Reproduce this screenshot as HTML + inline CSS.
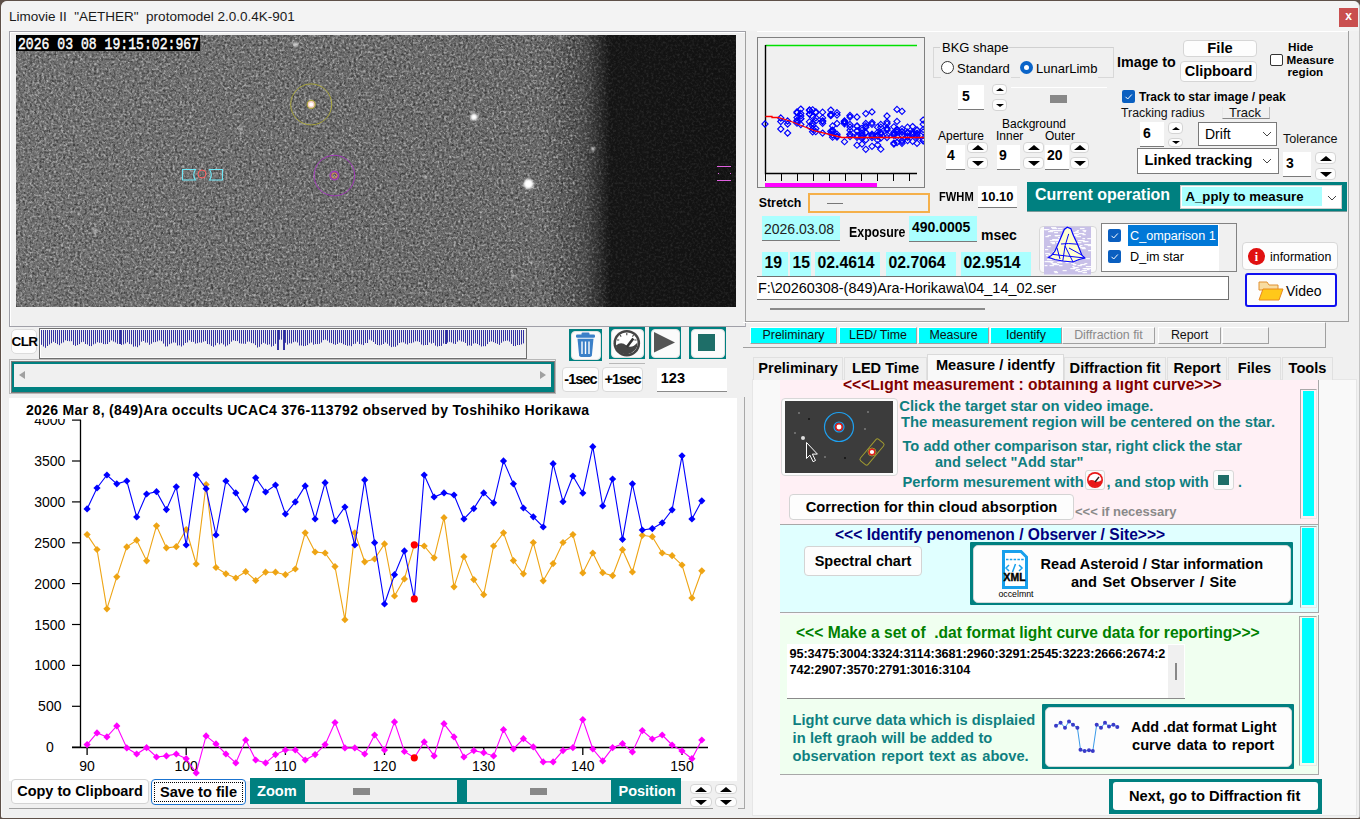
<!DOCTYPE html><html><head><meta charset="utf-8"><style>
*{box-sizing:border-box;margin:0;padding:0}
html,body{width:1360px;height:819px;overflow:hidden;background:#5e5048;font-family:"Liberation Sans",sans-serif;position:relative}
.a{position:absolute}
.t{position:absolute;white-space:nowrap;line-height:1}
.c{position:absolute;white-space:nowrap;display:flex;align-items:center;justify-content:center;line-height:1}
.btn{background:#fdfdfd;border:1px solid #d0d0d0;border-radius:4px;color:#000}
.spn{background:#fdfdfd;border:1px solid #d4d4d4;border-radius:4px;display:flex;align-items:center;justify-content:center}
.tu{width:0;height:0;border-style:solid;border-color:transparent transparent #000 transparent}
.td{width:0;height:0;border-style:solid;border-color:#000 transparent transparent transparent}
.edit{background:#fff;border-bottom:1px solid #7a7a7a}
</style></head><body><div class="a" style="left:1px;top:1px;width:1359px;height:817px;background:#f0f0f0;border-radius:6px 6px 2px 2px;border-left:1px solid #f8f8f8;border-right:1px solid #c4c4c4"></div>
<div class="a" style="left:2px;top:1px;width:1357px;height:30px;background:#f3f3f3;border-radius:6px 6px 0 0"></div>
<div class="t" style="left:9px;top:9.5px;font-size:13.5px;font-weight:normal;color:#1a1a1a;">Limovie II&nbsp;&nbsp;"AETHER"&nbsp;&nbsp;protomodel 2.0.0.4K-901</div>
<div class="a" style="left:1339px;top:8px;width:19px;height:19px;background:#c94f4f"></div>
<div class="c" style="left:1339px;top:6.5px;width:19px;height:19px;font-size:12px;font-weight:bold;color:#fff;">x</div>
<div class="a" style="left:9px;top:31px;width:737px;height:296px;border:1px solid #a0a0a8;border-right-color:#b0b0b8;background:#f0f0f0"></div>
<div class="a" style="left:10px;top:32px;width:735px;height:1px;background:#fff"></div>
<div class="a" style="left:10px;top:32px;width:1px;height:294px;background:#fff"></div>
<svg width="720" height="272" style="position:absolute;left:16px;top:35px">
<defs><linearGradient id="vg" x1="0" x2="1" y1="0" y2="0">
<stop offset="0" stop-color="#717171"/><stop offset="0.73" stop-color="#686868"/><stop offset="0.79" stop-color="#4a4a4a"/><stop offset="0.825" stop-color="#151515"/><stop offset="1" stop-color="#121212"/></linearGradient>
<filter id="bl" x="-1" y="-1" width="3" height="3"><feGaussianBlur stdDeviation="0.9"/></filter>
<filter id="nz" x="0" y="0" width="100%" height="100%"><feTurbulence type="fractalNoise" baseFrequency="0.42" numOctaves="2" seed="3"/><feColorMatrix values="0 0 0 0 1  0 0 0 0 1  0 0 0 0 1  0 0 0 2.4 -1.05"/><feGaussianBlur stdDeviation="0.45"/></filter>
<filter id="nz2" x="0" y="0" width="100%" height="100%"><feTurbulence type="fractalNoise" baseFrequency="0.42" numOctaves="2" seed="9"/><feColorMatrix values="0 0 0 0 0  0 0 0 0 0  0 0 0 0 0  0 0 0 2.4 -1.05"/><feGaussianBlur stdDeviation="0.45"/></filter>
<linearGradient id="mg" x1="0" x2="1"><stop offset="0" stop-color="#fff"/><stop offset="0.77" stop-color="#fff"/><stop offset="0.83" stop-color="#333"/><stop offset="1" stop-color="#333"/></linearGradient>
<mask id="mk"><rect width="720" height="272" fill="url(#mg)"/></mask></defs>
<rect width="720" height="272" fill="url(#vg)"/>
<g mask="url(#mk)"><rect width="720" height="272" filter="url(#nz)" opacity="0.5"/><rect width="720" height="272" filter="url(#nz2)" opacity="0.5"/></g>
<circle cx="512.5" cy="149" r="5" fill="#fff" opacity="1" filter="url(#bl)"/><circle cx="458" cy="82" r="3.5" fill="#fff" opacity="1" filter="url(#bl)"/><circle cx="577" cy="114" r="2" fill="#fff" opacity="0.75" filter="url(#bl)"/><circle cx="279.5" cy="9.5" r="2.2" fill="#fff" opacity="0.8" filter="url(#bl)"/><circle cx="225" cy="94" r="2" fill="#fff" opacity="0.55" filter="url(#bl)"/><circle cx="79.4" cy="196" r="2" fill="#fff" opacity="0.6" filter="url(#bl)"/><circle cx="409" cy="142" r="1.6" fill="#fff" opacity="0.5" filter="url(#bl)"/><circle cx="497.6" cy="241" r="1.8" fill="#fff" opacity="0.6" filter="url(#bl)"/><circle cx="516" cy="227.60000000000002" r="1.6" fill="#fff" opacity="0.5" filter="url(#bl)"/><circle cx="545" cy="2.6000000000000014" r="1.6" fill="#fff" opacity="0.6" filter="url(#bl)"/><circle cx="211.8" cy="164" r="1.5" fill="#fff" opacity="0.4" filter="url(#bl)"/>
<rect x="0" y="0" width="184" height="16" fill="#000"/>
<text x="2" y="14" font-family="Liberation Mono" font-size="16.5" fill="#fff" stroke="#fff" stroke-width="0.45" textLength="181" lengthAdjust="spacingAndGlyphs">2026 03 08 19:15:02:967</text>
<circle cx="295.2" cy="69.4" r="20.5" fill="none" stroke="#a8a43c" stroke-width="1"/>
<circle cx="295.2" cy="69.4" r="4" fill="#f8d0c8" stroke="#a8a43c" stroke-width="1.2"/>
<circle cx="295.2" cy="69.4" r="2" fill="#fff"/>
<circle cx="318.4" cy="140.6" r="20.3" fill="none" stroke="#a038b8" stroke-width="1"/>
<circle cx="318.4" cy="140.6" r="4.2" fill="none" stroke="#a038b8" stroke-width="1.5"/>
<circle cx="318.4" cy="140.6" r="2.6" fill="none" stroke="#e88858" stroke-width="1"/>
<circle cx="186" cy="139" r="4" fill="none" stroke="#ff6060" stroke-width="1"/>
<path d="M166.5 134.5 h13 q-3.5 5.25 0 10.5 h-13 z M206.5 134.5 h-13 q3.5 5.25 0 10.5 h13 z" fill="none" stroke="#70e8f8" stroke-width="1.1"/>
<path d="M701 131.5 h14 M701 145.5 h14" stroke="#e060e0" stroke-width="1"/>
<path d="M702 138.5 h1 M714 138.5 h1" stroke="#e060e0" stroke-width="1"/>
</svg>
<div class="c btn" style="left:11px;top:329px;width:26px;height:25px;font-size:13.5px;font-weight:bold;border-color:#dcdcdc;border-radius:5px;letter-spacing:-0.6px;padding-left:1px">CLR</div>
<div class="a" style="left:39px;top:328px;width:488px;height:31px;border:1px solid #6e6e6e;background:#f0f0f0"></div>
<div class="a" style="left:40px;top:329px;width:486px;height:1px;background:#fff"></div>
<div class="a" style="left:40px;top:329px;width:1px;height:29px;background:#fff"></div>
<div class="a" style="left:40px;top:357px;width:486px;height:1px;background:#fafafa"></div>
<svg class="a" style="left:39px;top:328px" width="487" height="30"><path d="M2.5 2 v14.8" stroke="#3434a4" stroke-width="1"/><path d="M4.5 2 v16.5" stroke="#3434a4" stroke-width="1"/><path d="M6.5 2 v17.8" stroke="#3434a4" stroke-width="1"/><path d="M8.5 2 v16.0" stroke="#3434a4" stroke-width="1"/><path d="M10.5 2 v14.5" stroke="#3434a4" stroke-width="1"/><path d="M12.5 2 v13.2" stroke="#3434a4" stroke-width="1"/><path d="M14.5 2 v11.8" stroke="#3434a4" stroke-width="1"/><path d="M16.5 2 v13.0" stroke="#3434a4" stroke-width="1"/><path d="M18.5 2 v14.2" stroke="#3434a4" stroke-width="1"/><path d="M20.5 2 v15.2" stroke="#3434a4" stroke-width="1"/><path d="M22.5 2 v13.3" stroke="#3434a4" stroke-width="1"/><path d="M24.5 2 v12.4" stroke="#3434a4" stroke-width="1"/><path d="M26.5 2 v10.3" stroke="#3434a4" stroke-width="1"/><path d="M28.5 2 v11.0" stroke="#3434a4" stroke-width="1"/><path d="M30.5 2 v11.2" stroke="#3434a4" stroke-width="1"/><path d="M32.5 2 v11.2" stroke="#3434a4" stroke-width="1"/><path d="M34.5 2 v14.9" stroke="#3434a4" stroke-width="1"/><path d="M36.5 2 v15.9" stroke="#3434a4" stroke-width="1"/><path d="M38.5 2 v15.1" stroke="#3434a4" stroke-width="1"/><path d="M40.5 2 v14.1" stroke="#3434a4" stroke-width="1"/><path d="M42.5 2 v12.2" stroke="#3434a4" stroke-width="1"/><path d="M44.5 2 v11.8" stroke="#3434a4" stroke-width="1"/><path d="M46.5 2 v14.0" stroke="#3434a4" stroke-width="1"/><path d="M48.5 2 v14.5" stroke="#3434a4" stroke-width="1"/><path d="M50.5 2 v16.0" stroke="#3434a4" stroke-width="1"/><path d="M52.5 2 v16.1" stroke="#3434a4" stroke-width="1"/><path d="M54.5 2 v14.4" stroke="#3434a4" stroke-width="1"/><path d="M56.5 2 v13.6" stroke="#3434a4" stroke-width="1"/><path d="M58.5 2 v12.2" stroke="#3434a4" stroke-width="1"/><path d="M60.5 2 v12.8" stroke="#3434a4" stroke-width="1"/><path d="M62.5 2 v12.8" stroke="#3434a4" stroke-width="1"/><path d="M64.5 2 v14.1" stroke="#3434a4" stroke-width="1"/><path d="M66.5 2 v14.2" stroke="#3434a4" stroke-width="1"/><path d="M68.5 2 v14.0" stroke="#3434a4" stroke-width="1"/><path d="M70.5 2 v12.1" stroke="#3434a4" stroke-width="1"/><path d="M72.5 2 v10.4" stroke="#3434a4" stroke-width="1"/><path d="M74.5 2 v11.5" stroke="#3434a4" stroke-width="1"/><path d="M76.5 2 v12.4" stroke="#3434a4" stroke-width="1"/><path d="M78.5 2 v13.8" stroke="#3434a4" stroke-width="1"/><path d="M81.5 2 v14.0" stroke="#3030a0" stroke-width="1"/><path d="M80.5 2 v14.0" stroke="#3434a4" stroke-width="1"/><path d="M82.5 2 v15.0" stroke="#3434a4" stroke-width="1"/><path d="M84.5 2 v14.4" stroke="#3434a4" stroke-width="1"/><path d="M86.5 2 v13.5" stroke="#3434a4" stroke-width="1"/><path d="M88.5 2 v12.2" stroke="#3434a4" stroke-width="1"/><path d="M90.5 2 v13.9" stroke="#3434a4" stroke-width="1"/><path d="M92.5 2 v14.3" stroke="#3434a4" stroke-width="1"/><path d="M94.5 2 v16.7" stroke="#3434a4" stroke-width="1"/><path d="M96.5 2 v16.4" stroke="#3434a4" stroke-width="1"/><path d="M98.5 2 v17.2" stroke="#3434a4" stroke-width="1"/><path d="M100.5 2 v15.4" stroke="#3434a4" stroke-width="1"/><path d="M102.5 2 v11.7" stroke="#3434a4" stroke-width="1"/><path d="M104.5 2 v11.0" stroke="#3434a4" stroke-width="1"/><path d="M106.5 2 v12.6" stroke="#3434a4" stroke-width="1"/><path d="M108.5 2 v12.6" stroke="#3434a4" stroke-width="1"/><path d="M110.5 2 v14.8" stroke="#3434a4" stroke-width="1"/><path d="M112.5 2 v13.7" stroke="#3434a4" stroke-width="1"/><path d="M114.5 2 v12.2" stroke="#3434a4" stroke-width="1"/><path d="M116.5 2 v12.1" stroke="#3434a4" stroke-width="1"/><path d="M118.5 2 v11.4" stroke="#3434a4" stroke-width="1"/><path d="M120.5 2 v10.4" stroke="#3434a4" stroke-width="1"/><path d="M122.5 2 v11.2" stroke="#3434a4" stroke-width="1"/><path d="M124.5 2 v13.6" stroke="#3434a4" stroke-width="1"/><path d="M126.5 2 v16.5" stroke="#3434a4" stroke-width="1"/><path d="M128.5 2 v16.4" stroke="#3434a4" stroke-width="1"/><path d="M130.5 2 v14.2" stroke="#3434a4" stroke-width="1"/><path d="M132.5 2 v13.4" stroke="#3434a4" stroke-width="1"/><path d="M134.5 2 v12.4" stroke="#3434a4" stroke-width="1"/><path d="M136.5 2 v12.7" stroke="#3434a4" stroke-width="1"/><path d="M138.5 2 v15.5" stroke="#3434a4" stroke-width="1"/><path d="M140.5 2 v15.3" stroke="#3434a4" stroke-width="1"/><path d="M142.5 2 v16.5" stroke="#3434a4" stroke-width="1"/><path d="M144.5 2 v15.3" stroke="#3434a4" stroke-width="1"/><path d="M146.5 2 v13.0" stroke="#3434a4" stroke-width="1"/><path d="M148.5 2 v12.4" stroke="#3434a4" stroke-width="1"/><path d="M150.5 2 v10.3" stroke="#3434a4" stroke-width="1"/><path d="M152.5 2 v11.9" stroke="#3434a4" stroke-width="1"/><path d="M154.5 2 v11.9" stroke="#3434a4" stroke-width="1"/><path d="M156.5 2 v13.6" stroke="#3434a4" stroke-width="1"/><path d="M158.5 2 v13.2" stroke="#3434a4" stroke-width="1"/><path d="M160.5 2 v12.4" stroke="#3434a4" stroke-width="1"/><path d="M162.5 2 v12.7" stroke="#3434a4" stroke-width="1"/><path d="M164.5 2 v11.7" stroke="#3434a4" stroke-width="1"/><path d="M166.5 2 v11.1" stroke="#3434a4" stroke-width="1"/><path d="M168.5 2 v14.0" stroke="#3434a4" stroke-width="1"/><path d="M170.5 2 v14.3" stroke="#3434a4" stroke-width="1"/><path d="M172.5 2 v15.9" stroke="#3434a4" stroke-width="1"/><path d="M174.5 2 v16.8" stroke="#3434a4" stroke-width="1"/><path d="M176.5 2 v15.3" stroke="#3434a4" stroke-width="1"/><path d="M178.5 2 v12.9" stroke="#3434a4" stroke-width="1"/><path d="M180.5 2 v14.4" stroke="#3434a4" stroke-width="1"/><path d="M182.5 2 v13.2" stroke="#3434a4" stroke-width="1"/><path d="M184.5 2 v14.5" stroke="#3434a4" stroke-width="1"/><path d="M186.5 2 v16.5" stroke="#3434a4" stroke-width="1"/><path d="M188.5 2 v15.4" stroke="#3434a4" stroke-width="1"/><path d="M190.5 2 v14.1" stroke="#3434a4" stroke-width="1"/><path d="M192.5 2 v11.7" stroke="#3434a4" stroke-width="1"/><path d="M194.5 2 v10.3" stroke="#3434a4" stroke-width="1"/><path d="M196.5 2 v11.0" stroke="#3434a4" stroke-width="1"/><path d="M198.5 2 v11.1" stroke="#3434a4" stroke-width="1"/><path d="M200.5 2 v13.2" stroke="#3434a4" stroke-width="1"/><path d="M202.5 2 v13.6" stroke="#3434a4" stroke-width="1"/><path d="M204.5 2 v13.7" stroke="#3434a4" stroke-width="1"/><path d="M206.5 2 v13.8" stroke="#3434a4" stroke-width="1"/><path d="M208.5 2 v11.7" stroke="#3434a4" stroke-width="1"/><path d="M210.5 2 v11.6" stroke="#3434a4" stroke-width="1"/><path d="M212.5 2 v13.1" stroke="#3434a4" stroke-width="1"/><path d="M214.5 2 v13.4" stroke="#3434a4" stroke-width="1"/><path d="M216.5 2 v15.1" stroke="#3434a4" stroke-width="1"/><path d="M218.5 2 v17.5" stroke="#3434a4" stroke-width="1"/><path d="M220.5 2 v16.8" stroke="#3434a4" stroke-width="1"/><path d="M222.5 2 v14.2" stroke="#3434a4" stroke-width="1"/><path d="M224.5 2 v12.8" stroke="#3434a4" stroke-width="1"/><path d="M226.5 2 v13.7" stroke="#3434a4" stroke-width="1"/><path d="M228.5 2 v14.8" stroke="#3434a4" stroke-width="1"/><path d="M230.5 2 v14.3" stroke="#3434a4" stroke-width="1"/><path d="M232.5 2 v16.6" stroke="#3434a4" stroke-width="1"/><path d="M234.5 2 v15.9" stroke="#3434a4" stroke-width="1"/><path d="M236.5 2 v13.8" stroke="#3434a4" stroke-width="1"/><path d="M239.5 2 v20.0" stroke="#3030a0" stroke-width="1"/><path d="M238.5 2 v20.0" stroke="#3434a4" stroke-width="1"/><path d="M240.5 2 v9.7" stroke="#3434a4" stroke-width="1"/><path d="M242.5 2 v9.7" stroke="#3434a4" stroke-width="1"/><path d="M245.5 2 v20.0" stroke="#3030a0" stroke-width="1"/><path d="M244.5 2 v20.0" stroke="#3434a4" stroke-width="1"/><path d="M246.5 2 v12.8" stroke="#3434a4" stroke-width="1"/><path d="M248.5 2 v14.6" stroke="#3434a4" stroke-width="1"/><path d="M250.5 2 v13.3" stroke="#3434a4" stroke-width="1"/><path d="M252.5 2 v13.5" stroke="#3434a4" stroke-width="1"/><path d="M254.5 2 v12.2" stroke="#3434a4" stroke-width="1"/><path d="M256.5 2 v11.6" stroke="#3434a4" stroke-width="1"/><path d="M258.5 2 v12.5" stroke="#3434a4" stroke-width="1"/><path d="M260.5 2 v15.5" stroke="#3434a4" stroke-width="1"/><path d="M262.5 2 v15.5" stroke="#3434a4" stroke-width="1"/><path d="M264.5 2 v16.1" stroke="#3434a4" stroke-width="1"/><path d="M266.5 2 v15.9" stroke="#3434a4" stroke-width="1"/><path d="M268.5 2 v15.1" stroke="#3434a4" stroke-width="1"/><path d="M270.5 2 v13.4" stroke="#3434a4" stroke-width="1"/><path d="M272.5 2 v12.5" stroke="#3434a4" stroke-width="1"/><path d="M274.5 2 v14.7" stroke="#3434a4" stroke-width="1"/><path d="M276.5 2 v14.1" stroke="#3434a4" stroke-width="1"/><path d="M278.5 2 v14.1" stroke="#3434a4" stroke-width="1"/><path d="M280.5 2 v13.8" stroke="#3434a4" stroke-width="1"/><path d="M282.5 2 v12.5" stroke="#3434a4" stroke-width="1"/><path d="M284.5 2 v10.1" stroke="#3434a4" stroke-width="1"/><path d="M286.5 2 v9.6" stroke="#3434a4" stroke-width="1"/><path d="M288.5 2 v10.7" stroke="#3434a4" stroke-width="1"/><path d="M290.5 2 v12.6" stroke="#3434a4" stroke-width="1"/><path d="M292.5 2 v13.1" stroke="#3434a4" stroke-width="1"/><path d="M294.5 2 v14.2" stroke="#3434a4" stroke-width="1"/><path d="M296.5 2 v14.8" stroke="#3434a4" stroke-width="1"/><path d="M298.5 2 v14.0" stroke="#3434a4" stroke-width="1"/><path d="M300.5 2 v12.6" stroke="#3434a4" stroke-width="1"/><path d="M302.5 2 v13.1" stroke="#3434a4" stroke-width="1"/><path d="M304.5 2 v14.3" stroke="#3434a4" stroke-width="1"/><path d="M306.5 2 v15.0" stroke="#3434a4" stroke-width="1"/><path d="M308.5 2 v15.8" stroke="#3434a4" stroke-width="1"/><path d="M310.5 2 v15.5" stroke="#3434a4" stroke-width="1"/><path d="M312.5 2 v16.2" stroke="#3434a4" stroke-width="1"/><path d="M314.5 2 v14.1" stroke="#3434a4" stroke-width="1"/><path d="M316.5 2 v13.7" stroke="#3434a4" stroke-width="1"/><path d="M318.5 2 v11.7" stroke="#3434a4" stroke-width="1"/><path d="M320.5 2 v14.0" stroke="#3434a4" stroke-width="1"/><path d="M322.5 2 v14.5" stroke="#3434a4" stroke-width="1"/><path d="M324.5 2 v15.1" stroke="#3434a4" stroke-width="1"/><path d="M326.5 2 v13.1" stroke="#3434a4" stroke-width="1"/><path d="M328.5 2 v13.0" stroke="#3434a4" stroke-width="1"/><path d="M330.5 2 v9.6" stroke="#3434a4" stroke-width="1"/><path d="M332.5 2 v10.5" stroke="#3434a4" stroke-width="1"/><path d="M334.5 2 v12.0" stroke="#3434a4" stroke-width="1"/><path d="M336.5 2 v14.0" stroke="#3434a4" stroke-width="1"/><path d="M338.5 2 v15.0" stroke="#3434a4" stroke-width="1"/><path d="M340.5 2 v15.3" stroke="#3434a4" stroke-width="1"/><path d="M342.5 2 v14.8" stroke="#3434a4" stroke-width="1"/><path d="M344.5 2 v14.0" stroke="#3434a4" stroke-width="1"/><path d="M346.5 2 v12.4" stroke="#3434a4" stroke-width="1"/><path d="M348.5 2 v13.8" stroke="#3434a4" stroke-width="1"/><path d="M350.5 2 v15.7" stroke="#3434a4" stroke-width="1"/><path d="M352.5 2 v17.1" stroke="#3434a4" stroke-width="1"/><path d="M354.5 2 v16.7" stroke="#3434a4" stroke-width="1"/><path d="M356.5 2 v16.8" stroke="#3434a4" stroke-width="1"/><path d="M358.5 2 v15.3" stroke="#3434a4" stroke-width="1"/><path d="M360.5 2 v13.0" stroke="#3434a4" stroke-width="1"/><path d="M362.5 2 v12.4" stroke="#3434a4" stroke-width="1"/><path d="M364.5 2 v12.3" stroke="#3434a4" stroke-width="1"/><path d="M366.5 2 v13.7" stroke="#3434a4" stroke-width="1"/><path d="M368.5 2 v14.5" stroke="#3434a4" stroke-width="1"/><path d="M370.5 2 v13.1" stroke="#3434a4" stroke-width="1"/><path d="M372.5 2 v13.2" stroke="#3434a4" stroke-width="1"/><path d="M374.5 2 v12.4" stroke="#3434a4" stroke-width="1"/><path d="M376.5 2 v11.3" stroke="#3434a4" stroke-width="1"/><path d="M378.5 2 v11.3" stroke="#3434a4" stroke-width="1"/><path d="M380.5 2 v12.0" stroke="#3434a4" stroke-width="1"/><path d="M382.5 2 v14.5" stroke="#3434a4" stroke-width="1"/><path d="M384.5 2 v15.3" stroke="#3434a4" stroke-width="1"/><path d="M386.5 2 v15.0" stroke="#3434a4" stroke-width="1"/><path d="M388.5 2 v15.0" stroke="#3434a4" stroke-width="1"/><path d="M390.5 2 v12.4" stroke="#3434a4" stroke-width="1"/><path d="M392.5 2 v13.6" stroke="#3434a4" stroke-width="1"/><path d="M394.5 2 v12.9" stroke="#3434a4" stroke-width="1"/><path d="M396.5 2 v15.6" stroke="#3434a4" stroke-width="1"/><path d="M398.5 2 v16.5" stroke="#3434a4" stroke-width="1"/><path d="M400.5 2 v16.0" stroke="#3434a4" stroke-width="1"/><path d="M402.5 2 v15.9" stroke="#3434a4" stroke-width="1"/><path d="M404.5 2 v13.6" stroke="#3434a4" stroke-width="1"/><path d="M407.5 2 v14.0" stroke="#3030a0" stroke-width="1"/><path d="M406.5 2 v14.0" stroke="#3434a4" stroke-width="1"/><path d="M408.5 2 v12.6" stroke="#3434a4" stroke-width="1"/><path d="M410.5 2 v11.8" stroke="#3434a4" stroke-width="1"/><path d="M412.5 2 v12.4" stroke="#3434a4" stroke-width="1"/><path d="M414.5 2 v13.6" stroke="#3434a4" stroke-width="1"/><path d="M416.5 2 v14.0" stroke="#3434a4" stroke-width="1"/><path d="M418.5 2 v11.7" stroke="#3434a4" stroke-width="1"/><path d="M420.5 2 v10.3" stroke="#3434a4" stroke-width="1"/><path d="M422.5 2 v11.5" stroke="#3434a4" stroke-width="1"/><path d="M424.5 2 v11.8" stroke="#3434a4" stroke-width="1"/><path d="M426.5 2 v13.0" stroke="#3434a4" stroke-width="1"/><path d="M428.5 2 v15.7" stroke="#3434a4" stroke-width="1"/><path d="M430.5 2 v15.3" stroke="#3434a4" stroke-width="1"/><path d="M432.5 2 v15.8" stroke="#3434a4" stroke-width="1"/><path d="M434.5 2 v13.6" stroke="#3434a4" stroke-width="1"/><path d="M436.5 2 v13.2" stroke="#3434a4" stroke-width="1"/><path d="M438.5 2 v14.0" stroke="#3434a4" stroke-width="1"/><path d="M440.5 2 v15.2" stroke="#3434a4" stroke-width="1"/><path d="M442.5 2 v16.5" stroke="#3434a4" stroke-width="1"/><path d="M444.5 2 v16.2" stroke="#3434a4" stroke-width="1"/><path d="M446.5 2 v16.2" stroke="#3434a4" stroke-width="1"/><path d="M448.5 2 v14.1" stroke="#3434a4" stroke-width="1"/><path d="M450.5 2 v11.9" stroke="#3434a4" stroke-width="1"/><path d="M452.5 2 v11.4" stroke="#3434a4" stroke-width="1"/><path d="M454.5 2 v12.1" stroke="#3434a4" stroke-width="1"/><path d="M456.5 2 v13.1" stroke="#3434a4" stroke-width="1"/><path d="M458.5 2 v13.9" stroke="#3434a4" stroke-width="1"/><path d="M460.5 2 v14.9" stroke="#3434a4" stroke-width="1"/><path d="M462.5 2 v12.8" stroke="#3434a4" stroke-width="1"/><path d="M464.5 2 v11.4" stroke="#3434a4" stroke-width="1"/><path d="M466.5 2 v10.9" stroke="#3434a4" stroke-width="1"/><path d="M468.5 2 v10.6" stroke="#3434a4" stroke-width="1"/><path d="M470.5 2 v11.6" stroke="#3434a4" stroke-width="1"/><path d="M472.5 2 v13.9" stroke="#3434a4" stroke-width="1"/><path d="M474.5 2 v16.0" stroke="#3434a4" stroke-width="1"/><path d="M476.5 2 v16.1" stroke="#3434a4" stroke-width="1"/><path d="M478.5 2 v15.0" stroke="#3434a4" stroke-width="1"/><path d="M480.5 2 v15.0" stroke="#3434a4" stroke-width="1"/><path d="M482.5 2 v14.4" stroke="#3434a4" stroke-width="1"/><path d="M484.5 2 v13.4" stroke="#3434a4" stroke-width="1"/></svg>
<div class="a" style="left:9px;top:359px;width:547px;height:35px;border:1px solid #b8b8b8;background:#f0f0f0"></div>
<div class="a" style="left:11px;top:361px;width:544px;height:32px;background:#008080;border:1px solid #7a7a7a"></div>
<div class="a" style="left:14px;top:364px;width:537px;height:23px;background:#f0f0f0"></div>
<div class="a" style="left:19px;top:371px;width:0;height:0;border-style:solid;border-width:4px 6px 4px 0;border-color:transparent #a0a0a0 transparent transparent"></div>
<div class="a" style="left:540px;top:371px;width:0;height:0;border-style:solid;border-width:4px 0 4px 6px;border-color:transparent transparent transparent #a0a0a0"></div>
<div class="a" style="left:569px;top:329px;width:33px;height:32px;background:#008080"></div>
<div class="a" style="left:570.5px;top:330.5px;width:30px;height:29px;background:#fbfbfb;border:1px solid #e2e2e2;border-radius:4px"></div>
<div class="a" style="left:609px;top:327px;width:36px;height:32px;background:#008080"></div>
<div class="a" style="left:610.5px;top:328.5px;width:33px;height:29px;background:#fbfbfb;border:1px solid #e2e2e2;border-radius:4px"></div>
<div class="a" style="left:649px;top:327px;width:32px;height:32px;background:#008080"></div>
<div class="a" style="left:650.5px;top:328.5px;width:29px;height:29px;background:#fbfbfb;border:1px solid #e2e2e2;border-radius:4px"></div>
<div class="a" style="left:689px;top:327px;width:37px;height:32px;background:#008080"></div>
<div class="a" style="left:690.5px;top:328.5px;width:34px;height:29px;background:#fbfbfb;border:1px solid #e2e2e2;border-radius:4px"></div>
<svg class="a" style="left:569px;top:329px" width="33" height="32"><g fill="#3b80c8"><rect x="7" y="5.5" width="19" height="3.2" rx="1.3"/><rect x="12.5" y="3.5" width="8" height="3" rx="1.2"/><path d="M8.5 9.8 h16 l-1.6 16.5 q-0.3 1.6 -2 1.6 h-8.8 q-1.7 0 -2 -1.6 z"/></g><g stroke="#fff" stroke-width="1.4"><path d="M13 12.5 v12.5 M16.5 12.5 v12.5 M20 12.5 v12.5"/></g></svg>
<div class="a" style="left:609px;top:363px;width:36px;height:1px;background:#b8b8b8"></div>
<svg class="a" style="left:609px;top:327px" width="36" height="32"><circle cx="17.8" cy="16.2" r="13.3" fill="#444"/><circle cx="17.8" cy="16.2" r="10.8" fill="#fff"/><path d="M7 18.5 q5 -4.5 10.5 0 q5.5 3.5 11 -3 q0.5 9 -10.7 12 q-10.5 -1 -10.8 -9z" fill="#444"/><path d="M17.8 20 l6.5 -8.5" stroke="#333" stroke-width="2.6"/><g stroke="#444" stroke-width="1.1"><path d="M17.8 6 v2.2 M11 8 l1.2 1.6 M24.6 8 l-1.2 1.6 M8 13 h2.2 M27.6 13 h-2.2 M7.5 19 h2 M28 19 h-2"/></g></svg>
<svg class="a" style="left:649px;top:327px" width="32" height="32"><path d="M5 5 L26 15.5 L5 25.4 Z" fill="#555"/></svg>
<div class="a" style="left:698px;top:334px;width:17px;height:17px;background:#1e6e68"></div>
<div class="c btn" style="left:562px;top:367px;width:37px;height:25px;font-size:14.5px;font-weight:bold;border-color:#dadada;letter-spacing:-0.9px;padding-bottom:0px">-1sec</div>
<div class="c btn" style="left:602px;top:367px;width:41px;height:25px;font-size:14.5px;font-weight:bold;border-color:#dadada;letter-spacing:-0.9px;padding-bottom:0px">+1sec</div>
<div class="a" style="left:657px;top:368px;width:70px;height:24px;background:#fff;border-bottom:1px solid #8a8a8a"></div>
<div class="t" style="left:660.8px;top:370.5px;font-size:14.5px;font-weight:bold;color:#000;">123</div>
<div class="a" style="left:9px;top:397px;width:736px;height:412px;border-right:1px solid #a8a8a8;border-bottom:1px solid #a8a8a8;background:#f0f0f0"></div>
<div class="a" style="left:9px;top:398px;width:728px;height:383px;background:#fff"></div>
<div class="a" style="left:10px;top:398px;width:727px;height:383px;background:#fff"></div>
<svg class="a" style="left:0;top:0" width="1360" height="819"><path d="M80.5 420 V747.5 M72 747.5 H708" stroke="#000" stroke-width="1.3" fill="none"/><path d="M72 747.2 H81" stroke="#000" stroke-width="1.2"/><text x="49.8" y="752.2" text-anchor="middle" font-size="14" fill="#000">0</text><path d="M72 706.3 H81" stroke="#000" stroke-width="1.2"/><text x="49.8" y="711.3" text-anchor="middle" font-size="14" fill="#000">500</text><path d="M72 665.4 H81" stroke="#000" stroke-width="1.2"/><text x="49.8" y="670.4" text-anchor="middle" font-size="14" fill="#000">1000</text><path d="M72 624.5 H81" stroke="#000" stroke-width="1.2"/><text x="49.8" y="629.5" text-anchor="middle" font-size="14" fill="#000">1500</text><path d="M72 583.6 H81" stroke="#000" stroke-width="1.2"/><text x="49.8" y="588.6" text-anchor="middle" font-size="14" fill="#000">2000</text><path d="M72 542.8 H81" stroke="#000" stroke-width="1.2"/><text x="49.8" y="547.8" text-anchor="middle" font-size="14" fill="#000">2500</text><path d="M72 501.9 H81" stroke="#000" stroke-width="1.2"/><text x="49.8" y="506.9" text-anchor="middle" font-size="14" fill="#000">3000</text><path d="M72 461.0 H81" stroke="#000" stroke-width="1.2"/><text x="49.8" y="466.0" text-anchor="middle" font-size="14" fill="#000">3500</text><path d="M72 420.1 H81" stroke="#000" stroke-width="1.2"/><text x="49.8" y="425.1" text-anchor="middle" font-size="14" fill="#000">4000</text><path d="M87.1 747.5 V755" stroke="#000" stroke-width="1.3"/><text x="87.1" y="771" text-anchor="middle" font-size="14" fill="#000">90</text><path d="M186.2 747.5 V755" stroke="#000" stroke-width="1.3"/><text x="186.2" y="771" text-anchor="middle" font-size="14" fill="#000">100</text><path d="M285.4 747.5 V755" stroke="#000" stroke-width="1.3"/><text x="285.4" y="771" text-anchor="middle" font-size="14" fill="#000">110</text><path d="M384.5 747.5 V755" stroke="#000" stroke-width="1.3"/><text x="384.5" y="771" text-anchor="middle" font-size="14" fill="#000">120</text><path d="M483.7 747.5 V755" stroke="#000" stroke-width="1.3"/><text x="483.7" y="771" text-anchor="middle" font-size="14" fill="#000">130</text><path d="M582.8 747.5 V755" stroke="#000" stroke-width="1.3"/><text x="582.8" y="771" text-anchor="middle" font-size="14" fill="#000">140</text><path d="M682.0 747.5 V755" stroke="#000" stroke-width="1.3"/><text x="682.0" y="771" text-anchor="middle" font-size="14" fill="#000">150</text><polyline points="87.1,534.6 97.0,549.5 106.9,608.8 116.8,576.8 126.8,546.9 136.7,540.2 146.6,560.8 156.5,525.8 166.4,547.8 176.3,546.7 186.2,529.5 196.2,564.0 206.1,484.5 216.0,567.5 225.9,573.8 235.8,578.0 245.7,571.7 255.7,580.5 265.6,572.2 275.5,572.2 285.4,574.7 295.3,569.0 305.2,532.8 315.1,552.0 325.1,553.0 335.0,566.6 344.9,619.7 354.8,532.8 364.7,561.8 374.6,559.0 384.5,543.9 394.5,596.0 404.4,578.9 414.3,544.8 424.2,546.0 434.1,557.8 444.0,517.7 454.0,586.8 463.9,556.7 473.8,579.6 483.7,594.7 493.6,546.0 503.5,532.8 513.4,560.6 523.4,573.8 533.3,542.5 543.2,580.8 553.1,563.6 563.0,542.5 572.9,534.6 582.8,572.9 592.8,553.0 602.7,572.7 612.6,575.7 622.5,549.7 632.4,572.0 642.3,535.3 652.3,536.7 662.2,553.0 672.1,555.7 682.0,565.0 691.9,598.0 701.8,570.8" fill="none" stroke="#eea414" stroke-width="1.1"/><path d="M87.1 531.0 l3.6 3.6 l-3.6 3.6 l-3.6 -3.6z" fill="#eea414"/><path d="M97.0 545.9 l3.6 3.6 l-3.6 3.6 l-3.6 -3.6z" fill="#eea414"/><path d="M106.9 605.2 l3.6 3.6 l-3.6 3.6 l-3.6 -3.6z" fill="#eea414"/><path d="M116.8 573.2 l3.6 3.6 l-3.6 3.6 l-3.6 -3.6z" fill="#eea414"/><path d="M126.8 543.3 l3.6 3.6 l-3.6 3.6 l-3.6 -3.6z" fill="#eea414"/><path d="M136.7 536.6 l3.6 3.6 l-3.6 3.6 l-3.6 -3.6z" fill="#eea414"/><path d="M146.6 557.2 l3.6 3.6 l-3.6 3.6 l-3.6 -3.6z" fill="#eea414"/><path d="M156.5 522.2 l3.6 3.6 l-3.6 3.6 l-3.6 -3.6z" fill="#eea414"/><path d="M166.4 544.2 l3.6 3.6 l-3.6 3.6 l-3.6 -3.6z" fill="#eea414"/><path d="M176.3 543.1 l3.6 3.6 l-3.6 3.6 l-3.6 -3.6z" fill="#eea414"/><path d="M186.2 525.9 l3.6 3.6 l-3.6 3.6 l-3.6 -3.6z" fill="#eea414"/><path d="M196.2 560.4 l3.6 3.6 l-3.6 3.6 l-3.6 -3.6z" fill="#eea414"/><path d="M206.1 480.9 l3.6 3.6 l-3.6 3.6 l-3.6 -3.6z" fill="#eea414"/><path d="M216.0 563.9 l3.6 3.6 l-3.6 3.6 l-3.6 -3.6z" fill="#eea414"/><path d="M225.9 570.2 l3.6 3.6 l-3.6 3.6 l-3.6 -3.6z" fill="#eea414"/><path d="M235.8 574.4 l3.6 3.6 l-3.6 3.6 l-3.6 -3.6z" fill="#eea414"/><path d="M245.7 568.1 l3.6 3.6 l-3.6 3.6 l-3.6 -3.6z" fill="#eea414"/><path d="M255.7 576.9 l3.6 3.6 l-3.6 3.6 l-3.6 -3.6z" fill="#eea414"/><path d="M265.6 568.6 l3.6 3.6 l-3.6 3.6 l-3.6 -3.6z" fill="#eea414"/><path d="M275.5 568.6 l3.6 3.6 l-3.6 3.6 l-3.6 -3.6z" fill="#eea414"/><path d="M285.4 571.1 l3.6 3.6 l-3.6 3.6 l-3.6 -3.6z" fill="#eea414"/><path d="M295.3 565.4 l3.6 3.6 l-3.6 3.6 l-3.6 -3.6z" fill="#eea414"/><path d="M305.2 529.2 l3.6 3.6 l-3.6 3.6 l-3.6 -3.6z" fill="#eea414"/><path d="M315.1 548.4 l3.6 3.6 l-3.6 3.6 l-3.6 -3.6z" fill="#eea414"/><path d="M325.1 549.4 l3.6 3.6 l-3.6 3.6 l-3.6 -3.6z" fill="#eea414"/><path d="M335.0 563.0 l3.6 3.6 l-3.6 3.6 l-3.6 -3.6z" fill="#eea414"/><path d="M344.9 616.1 l3.6 3.6 l-3.6 3.6 l-3.6 -3.6z" fill="#eea414"/><path d="M354.8 529.2 l3.6 3.6 l-3.6 3.6 l-3.6 -3.6z" fill="#eea414"/><path d="M364.7 558.2 l3.6 3.6 l-3.6 3.6 l-3.6 -3.6z" fill="#eea414"/><path d="M374.6 555.4 l3.6 3.6 l-3.6 3.6 l-3.6 -3.6z" fill="#eea414"/><path d="M384.5 540.3 l3.6 3.6 l-3.6 3.6 l-3.6 -3.6z" fill="#eea414"/><path d="M394.5 592.4 l3.6 3.6 l-3.6 3.6 l-3.6 -3.6z" fill="#eea414"/><path d="M404.4 575.3 l3.6 3.6 l-3.6 3.6 l-3.6 -3.6z" fill="#eea414"/><circle cx="414.3" cy="544.8" r="3.6" fill="#ff0000"/><path d="M424.2 542.4 l3.6 3.6 l-3.6 3.6 l-3.6 -3.6z" fill="#eea414"/><path d="M434.1 554.2 l3.6 3.6 l-3.6 3.6 l-3.6 -3.6z" fill="#eea414"/><path d="M444.0 514.1 l3.6 3.6 l-3.6 3.6 l-3.6 -3.6z" fill="#eea414"/><path d="M454.0 583.2 l3.6 3.6 l-3.6 3.6 l-3.6 -3.6z" fill="#eea414"/><path d="M463.9 553.1 l3.6 3.6 l-3.6 3.6 l-3.6 -3.6z" fill="#eea414"/><path d="M473.8 576.0 l3.6 3.6 l-3.6 3.6 l-3.6 -3.6z" fill="#eea414"/><path d="M483.7 591.1 l3.6 3.6 l-3.6 3.6 l-3.6 -3.6z" fill="#eea414"/><path d="M493.6 542.4 l3.6 3.6 l-3.6 3.6 l-3.6 -3.6z" fill="#eea414"/><path d="M503.5 529.2 l3.6 3.6 l-3.6 3.6 l-3.6 -3.6z" fill="#eea414"/><path d="M513.4 557.0 l3.6 3.6 l-3.6 3.6 l-3.6 -3.6z" fill="#eea414"/><path d="M523.4 570.2 l3.6 3.6 l-3.6 3.6 l-3.6 -3.6z" fill="#eea414"/><path d="M533.3 538.9 l3.6 3.6 l-3.6 3.6 l-3.6 -3.6z" fill="#eea414"/><path d="M543.2 577.2 l3.6 3.6 l-3.6 3.6 l-3.6 -3.6z" fill="#eea414"/><path d="M553.1 560.0 l3.6 3.6 l-3.6 3.6 l-3.6 -3.6z" fill="#eea414"/><path d="M563.0 538.9 l3.6 3.6 l-3.6 3.6 l-3.6 -3.6z" fill="#eea414"/><path d="M572.9 531.0 l3.6 3.6 l-3.6 3.6 l-3.6 -3.6z" fill="#eea414"/><path d="M582.8 569.3 l3.6 3.6 l-3.6 3.6 l-3.6 -3.6z" fill="#eea414"/><path d="M592.8 549.4 l3.6 3.6 l-3.6 3.6 l-3.6 -3.6z" fill="#eea414"/><path d="M602.7 569.1 l3.6 3.6 l-3.6 3.6 l-3.6 -3.6z" fill="#eea414"/><path d="M612.6 572.1 l3.6 3.6 l-3.6 3.6 l-3.6 -3.6z" fill="#eea414"/><path d="M622.5 546.1 l3.6 3.6 l-3.6 3.6 l-3.6 -3.6z" fill="#eea414"/><path d="M632.4 568.4 l3.6 3.6 l-3.6 3.6 l-3.6 -3.6z" fill="#eea414"/><path d="M642.3 531.7 l3.6 3.6 l-3.6 3.6 l-3.6 -3.6z" fill="#eea414"/><path d="M652.3 533.1 l3.6 3.6 l-3.6 3.6 l-3.6 -3.6z" fill="#eea414"/><path d="M662.2 549.4 l3.6 3.6 l-3.6 3.6 l-3.6 -3.6z" fill="#eea414"/><path d="M672.1 552.1 l3.6 3.6 l-3.6 3.6 l-3.6 -3.6z" fill="#eea414"/><path d="M682.0 561.4 l3.6 3.6 l-3.6 3.6 l-3.6 -3.6z" fill="#eea414"/><path d="M691.9 594.4 l3.6 3.6 l-3.6 3.6 l-3.6 -3.6z" fill="#eea414"/><path d="M701.8 567.2 l3.6 3.6 l-3.6 3.6 l-3.6 -3.6z" fill="#eea414"/><polyline points="87.1,508.9 97.0,488.0 106.9,475.0 116.8,483.8 126.8,481.0 136.7,517.0 146.6,494.0 156.5,491.7 166.4,509.6 176.3,486.8 186.2,545.0 196.2,475.0 206.1,488.7 216.0,535.0 225.9,481.0 235.8,492.9 245.7,509.6 255.7,477.8 265.6,492.0 275.5,485.0 285.4,514.0 295.3,501.9 305.2,485.9 315.1,519.0 325.1,482.7 335.0,521.0 344.9,507.0 354.8,545.0 364.7,479.9 374.6,542.7 384.5,604.0 394.5,574.7 404.4,550.9 414.3,598.9 424.2,475.0 434.1,497.0 444.0,492.9 454.0,495.0 463.9,519.0 473.8,508.6 483.7,492.9 493.6,502.8 503.5,460.9 513.4,483.8 523.4,508.0 533.3,516.8 543.2,527.0 553.1,463.7 563.0,501.7 572.9,476.0 582.8,493.1 592.8,446.7 602.7,506.0 612.6,479.0 622.5,539.3 632.4,483.8 642.3,530.0 652.3,528.6 662.2,522.8 672.1,509.8 682.0,455.8 691.9,519.0 701.8,500.8" fill="none" stroke="#0000ff" stroke-width="1.1"/><path d="M87.1 505.3 l3.6 3.6 l-3.6 3.6 l-3.6 -3.6z" fill="#0000ff"/><path d="M97.0 484.4 l3.6 3.6 l-3.6 3.6 l-3.6 -3.6z" fill="#0000ff"/><path d="M106.9 471.4 l3.6 3.6 l-3.6 3.6 l-3.6 -3.6z" fill="#0000ff"/><path d="M116.8 480.2 l3.6 3.6 l-3.6 3.6 l-3.6 -3.6z" fill="#0000ff"/><path d="M126.8 477.4 l3.6 3.6 l-3.6 3.6 l-3.6 -3.6z" fill="#0000ff"/><path d="M136.7 513.4 l3.6 3.6 l-3.6 3.6 l-3.6 -3.6z" fill="#0000ff"/><path d="M146.6 490.4 l3.6 3.6 l-3.6 3.6 l-3.6 -3.6z" fill="#0000ff"/><path d="M156.5 488.1 l3.6 3.6 l-3.6 3.6 l-3.6 -3.6z" fill="#0000ff"/><path d="M166.4 506.0 l3.6 3.6 l-3.6 3.6 l-3.6 -3.6z" fill="#0000ff"/><path d="M176.3 483.2 l3.6 3.6 l-3.6 3.6 l-3.6 -3.6z" fill="#0000ff"/><path d="M186.2 541.4 l3.6 3.6 l-3.6 3.6 l-3.6 -3.6z" fill="#0000ff"/><path d="M196.2 471.4 l3.6 3.6 l-3.6 3.6 l-3.6 -3.6z" fill="#0000ff"/><path d="M206.1 485.1 l3.6 3.6 l-3.6 3.6 l-3.6 -3.6z" fill="#0000ff"/><path d="M216.0 531.4 l3.6 3.6 l-3.6 3.6 l-3.6 -3.6z" fill="#0000ff"/><path d="M225.9 477.4 l3.6 3.6 l-3.6 3.6 l-3.6 -3.6z" fill="#0000ff"/><path d="M235.8 489.3 l3.6 3.6 l-3.6 3.6 l-3.6 -3.6z" fill="#0000ff"/><path d="M245.7 506.0 l3.6 3.6 l-3.6 3.6 l-3.6 -3.6z" fill="#0000ff"/><path d="M255.7 474.2 l3.6 3.6 l-3.6 3.6 l-3.6 -3.6z" fill="#0000ff"/><path d="M265.6 488.4 l3.6 3.6 l-3.6 3.6 l-3.6 -3.6z" fill="#0000ff"/><path d="M275.5 481.4 l3.6 3.6 l-3.6 3.6 l-3.6 -3.6z" fill="#0000ff"/><path d="M285.4 510.4 l3.6 3.6 l-3.6 3.6 l-3.6 -3.6z" fill="#0000ff"/><path d="M295.3 498.3 l3.6 3.6 l-3.6 3.6 l-3.6 -3.6z" fill="#0000ff"/><path d="M305.2 482.3 l3.6 3.6 l-3.6 3.6 l-3.6 -3.6z" fill="#0000ff"/><path d="M315.1 515.4 l3.6 3.6 l-3.6 3.6 l-3.6 -3.6z" fill="#0000ff"/><path d="M325.1 479.1 l3.6 3.6 l-3.6 3.6 l-3.6 -3.6z" fill="#0000ff"/><path d="M335.0 517.4 l3.6 3.6 l-3.6 3.6 l-3.6 -3.6z" fill="#0000ff"/><path d="M344.9 503.4 l3.6 3.6 l-3.6 3.6 l-3.6 -3.6z" fill="#0000ff"/><path d="M354.8 541.4 l3.6 3.6 l-3.6 3.6 l-3.6 -3.6z" fill="#0000ff"/><path d="M364.7 476.3 l3.6 3.6 l-3.6 3.6 l-3.6 -3.6z" fill="#0000ff"/><path d="M374.6 539.1 l3.6 3.6 l-3.6 3.6 l-3.6 -3.6z" fill="#0000ff"/><path d="M384.5 600.4 l3.6 3.6 l-3.6 3.6 l-3.6 -3.6z" fill="#0000ff"/><path d="M394.5 571.1 l3.6 3.6 l-3.6 3.6 l-3.6 -3.6z" fill="#0000ff"/><path d="M404.4 547.3 l3.6 3.6 l-3.6 3.6 l-3.6 -3.6z" fill="#0000ff"/><circle cx="414.3" cy="598.9" r="3.6" fill="#ff0000"/><path d="M424.2 471.4 l3.6 3.6 l-3.6 3.6 l-3.6 -3.6z" fill="#0000ff"/><path d="M434.1 493.4 l3.6 3.6 l-3.6 3.6 l-3.6 -3.6z" fill="#0000ff"/><path d="M444.0 489.3 l3.6 3.6 l-3.6 3.6 l-3.6 -3.6z" fill="#0000ff"/><path d="M454.0 491.4 l3.6 3.6 l-3.6 3.6 l-3.6 -3.6z" fill="#0000ff"/><path d="M463.9 515.4 l3.6 3.6 l-3.6 3.6 l-3.6 -3.6z" fill="#0000ff"/><path d="M473.8 505.0 l3.6 3.6 l-3.6 3.6 l-3.6 -3.6z" fill="#0000ff"/><path d="M483.7 489.3 l3.6 3.6 l-3.6 3.6 l-3.6 -3.6z" fill="#0000ff"/><path d="M493.6 499.2 l3.6 3.6 l-3.6 3.6 l-3.6 -3.6z" fill="#0000ff"/><path d="M503.5 457.3 l3.6 3.6 l-3.6 3.6 l-3.6 -3.6z" fill="#0000ff"/><path d="M513.4 480.2 l3.6 3.6 l-3.6 3.6 l-3.6 -3.6z" fill="#0000ff"/><path d="M523.4 504.4 l3.6 3.6 l-3.6 3.6 l-3.6 -3.6z" fill="#0000ff"/><path d="M533.3 513.2 l3.6 3.6 l-3.6 3.6 l-3.6 -3.6z" fill="#0000ff"/><path d="M543.2 523.4 l3.6 3.6 l-3.6 3.6 l-3.6 -3.6z" fill="#0000ff"/><path d="M553.1 460.1 l3.6 3.6 l-3.6 3.6 l-3.6 -3.6z" fill="#0000ff"/><path d="M563.0 498.1 l3.6 3.6 l-3.6 3.6 l-3.6 -3.6z" fill="#0000ff"/><path d="M572.9 472.4 l3.6 3.6 l-3.6 3.6 l-3.6 -3.6z" fill="#0000ff"/><path d="M582.8 489.5 l3.6 3.6 l-3.6 3.6 l-3.6 -3.6z" fill="#0000ff"/><path d="M592.8 443.1 l3.6 3.6 l-3.6 3.6 l-3.6 -3.6z" fill="#0000ff"/><path d="M602.7 502.4 l3.6 3.6 l-3.6 3.6 l-3.6 -3.6z" fill="#0000ff"/><path d="M612.6 475.4 l3.6 3.6 l-3.6 3.6 l-3.6 -3.6z" fill="#0000ff"/><path d="M622.5 535.7 l3.6 3.6 l-3.6 3.6 l-3.6 -3.6z" fill="#0000ff"/><path d="M632.4 480.2 l3.6 3.6 l-3.6 3.6 l-3.6 -3.6z" fill="#0000ff"/><path d="M642.3 526.4 l3.6 3.6 l-3.6 3.6 l-3.6 -3.6z" fill="#0000ff"/><path d="M652.3 525.0 l3.6 3.6 l-3.6 3.6 l-3.6 -3.6z" fill="#0000ff"/><path d="M662.2 519.2 l3.6 3.6 l-3.6 3.6 l-3.6 -3.6z" fill="#0000ff"/><path d="M672.1 506.2 l3.6 3.6 l-3.6 3.6 l-3.6 -3.6z" fill="#0000ff"/><path d="M682.0 452.2 l3.6 3.6 l-3.6 3.6 l-3.6 -3.6z" fill="#0000ff"/><path d="M691.9 515.4 l3.6 3.6 l-3.6 3.6 l-3.6 -3.6z" fill="#0000ff"/><path d="M701.8 497.2 l3.6 3.6 l-3.6 3.6 l-3.6 -3.6z" fill="#0000ff"/><polyline points="87.1,744.6 97.0,732.9 106.9,736.9 116.8,725.9 126.8,747.9 136.7,754.0 146.6,747.8 156.5,757.0 166.4,755.9 176.3,754.0 186.2,758.8 196.2,772.9 206.1,735.9 216.0,743.9 225.9,754.0 235.8,762.9 245.7,740.0 255.7,760.0 265.6,762.9 275.5,754.6 285.4,750.0 295.3,750.0 305.2,760.0 315.1,754.6 325.1,744.6 335.0,722.5 344.9,747.9 354.8,747.9 364.7,754.0 374.6,735.0 384.5,750.0 394.5,721.9 404.4,751.5 414.3,757.8 424.2,741.9 434.1,755.9 444.0,723.8 454.0,736.9 463.9,757.0 473.8,750.6 483.7,752.8 493.6,755.9 503.5,729.8 513.4,749.0 523.4,738.8 533.3,746.9 543.2,761.9 553.1,761.9 563.0,750.6 572.9,747.8 582.8,719.6 592.8,749.0 602.7,760.9 612.6,747.8 622.5,743.8 632.4,751.9 642.3,730.6 652.3,739.0 662.2,735.0 672.1,745.0 682.0,750.9 691.9,758.8 701.8,740.0" fill="none" stroke="#ff00ff" stroke-width="1.1"/><path d="M87.1 741.0 l3.6 3.6 l-3.6 3.6 l-3.6 -3.6z" fill="#ff00ff"/><path d="M97.0 729.3 l3.6 3.6 l-3.6 3.6 l-3.6 -3.6z" fill="#ff00ff"/><path d="M106.9 733.3 l3.6 3.6 l-3.6 3.6 l-3.6 -3.6z" fill="#ff00ff"/><path d="M116.8 722.3 l3.6 3.6 l-3.6 3.6 l-3.6 -3.6z" fill="#ff00ff"/><path d="M126.8 744.3 l3.6 3.6 l-3.6 3.6 l-3.6 -3.6z" fill="#ff00ff"/><path d="M136.7 750.4 l3.6 3.6 l-3.6 3.6 l-3.6 -3.6z" fill="#ff00ff"/><path d="M146.6 744.1 l3.6 3.6 l-3.6 3.6 l-3.6 -3.6z" fill="#ff00ff"/><path d="M156.5 753.4 l3.6 3.6 l-3.6 3.6 l-3.6 -3.6z" fill="#ff00ff"/><path d="M166.4 752.3 l3.6 3.6 l-3.6 3.6 l-3.6 -3.6z" fill="#ff00ff"/><path d="M176.3 750.4 l3.6 3.6 l-3.6 3.6 l-3.6 -3.6z" fill="#ff00ff"/><path d="M186.2 755.1 l3.6 3.6 l-3.6 3.6 l-3.6 -3.6z" fill="#ff00ff"/><path d="M196.2 769.3 l3.6 3.6 l-3.6 3.6 l-3.6 -3.6z" fill="#ff00ff"/><path d="M206.1 732.3 l3.6 3.6 l-3.6 3.6 l-3.6 -3.6z" fill="#ff00ff"/><path d="M216.0 740.3 l3.6 3.6 l-3.6 3.6 l-3.6 -3.6z" fill="#ff00ff"/><path d="M225.9 750.4 l3.6 3.6 l-3.6 3.6 l-3.6 -3.6z" fill="#ff00ff"/><path d="M235.8 759.3 l3.6 3.6 l-3.6 3.6 l-3.6 -3.6z" fill="#ff00ff"/><path d="M245.7 736.4 l3.6 3.6 l-3.6 3.6 l-3.6 -3.6z" fill="#ff00ff"/><path d="M255.7 756.4 l3.6 3.6 l-3.6 3.6 l-3.6 -3.6z" fill="#ff00ff"/><path d="M265.6 759.3 l3.6 3.6 l-3.6 3.6 l-3.6 -3.6z" fill="#ff00ff"/><path d="M275.5 751.0 l3.6 3.6 l-3.6 3.6 l-3.6 -3.6z" fill="#ff00ff"/><path d="M285.4 746.4 l3.6 3.6 l-3.6 3.6 l-3.6 -3.6z" fill="#ff00ff"/><path d="M295.3 746.4 l3.6 3.6 l-3.6 3.6 l-3.6 -3.6z" fill="#ff00ff"/><path d="M305.2 756.4 l3.6 3.6 l-3.6 3.6 l-3.6 -3.6z" fill="#ff00ff"/><path d="M315.1 751.0 l3.6 3.6 l-3.6 3.6 l-3.6 -3.6z" fill="#ff00ff"/><path d="M325.1 741.0 l3.6 3.6 l-3.6 3.6 l-3.6 -3.6z" fill="#ff00ff"/><path d="M335.0 718.9 l3.6 3.6 l-3.6 3.6 l-3.6 -3.6z" fill="#ff00ff"/><path d="M344.9 744.3 l3.6 3.6 l-3.6 3.6 l-3.6 -3.6z" fill="#ff00ff"/><path d="M354.8 744.3 l3.6 3.6 l-3.6 3.6 l-3.6 -3.6z" fill="#ff00ff"/><path d="M364.7 750.4 l3.6 3.6 l-3.6 3.6 l-3.6 -3.6z" fill="#ff00ff"/><path d="M374.6 731.4 l3.6 3.6 l-3.6 3.6 l-3.6 -3.6z" fill="#ff00ff"/><path d="M384.5 746.4 l3.6 3.6 l-3.6 3.6 l-3.6 -3.6z" fill="#ff00ff"/><path d="M394.5 718.3 l3.6 3.6 l-3.6 3.6 l-3.6 -3.6z" fill="#ff00ff"/><path d="M404.4 747.9 l3.6 3.6 l-3.6 3.6 l-3.6 -3.6z" fill="#ff00ff"/><circle cx="414.3" cy="757.8" r="3.6" fill="#ff0000"/><path d="M424.2 738.3 l3.6 3.6 l-3.6 3.6 l-3.6 -3.6z" fill="#ff00ff"/><path d="M434.1 752.3 l3.6 3.6 l-3.6 3.6 l-3.6 -3.6z" fill="#ff00ff"/><path d="M444.0 720.1 l3.6 3.6 l-3.6 3.6 l-3.6 -3.6z" fill="#ff00ff"/><path d="M454.0 733.3 l3.6 3.6 l-3.6 3.6 l-3.6 -3.6z" fill="#ff00ff"/><path d="M463.9 753.4 l3.6 3.6 l-3.6 3.6 l-3.6 -3.6z" fill="#ff00ff"/><path d="M473.8 747.0 l3.6 3.6 l-3.6 3.6 l-3.6 -3.6z" fill="#ff00ff"/><path d="M483.7 749.1 l3.6 3.6 l-3.6 3.6 l-3.6 -3.6z" fill="#ff00ff"/><path d="M493.6 752.3 l3.6 3.6 l-3.6 3.6 l-3.6 -3.6z" fill="#ff00ff"/><path d="M503.5 726.1 l3.6 3.6 l-3.6 3.6 l-3.6 -3.6z" fill="#ff00ff"/><path d="M513.4 745.4 l3.6 3.6 l-3.6 3.6 l-3.6 -3.6z" fill="#ff00ff"/><path d="M523.4 735.1 l3.6 3.6 l-3.6 3.6 l-3.6 -3.6z" fill="#ff00ff"/><path d="M533.3 743.3 l3.6 3.6 l-3.6 3.6 l-3.6 -3.6z" fill="#ff00ff"/><path d="M543.2 758.3 l3.6 3.6 l-3.6 3.6 l-3.6 -3.6z" fill="#ff00ff"/><path d="M553.1 758.3 l3.6 3.6 l-3.6 3.6 l-3.6 -3.6z" fill="#ff00ff"/><path d="M563.0 747.0 l3.6 3.6 l-3.6 3.6 l-3.6 -3.6z" fill="#ff00ff"/><path d="M572.9 744.1 l3.6 3.6 l-3.6 3.6 l-3.6 -3.6z" fill="#ff00ff"/><path d="M582.8 716.0 l3.6 3.6 l-3.6 3.6 l-3.6 -3.6z" fill="#ff00ff"/><path d="M592.8 745.4 l3.6 3.6 l-3.6 3.6 l-3.6 -3.6z" fill="#ff00ff"/><path d="M602.7 757.3 l3.6 3.6 l-3.6 3.6 l-3.6 -3.6z" fill="#ff00ff"/><path d="M612.6 744.1 l3.6 3.6 l-3.6 3.6 l-3.6 -3.6z" fill="#ff00ff"/><path d="M622.5 740.1 l3.6 3.6 l-3.6 3.6 l-3.6 -3.6z" fill="#ff00ff"/><path d="M632.4 748.3 l3.6 3.6 l-3.6 3.6 l-3.6 -3.6z" fill="#ff00ff"/><path d="M642.3 727.0 l3.6 3.6 l-3.6 3.6 l-3.6 -3.6z" fill="#ff00ff"/><path d="M652.3 735.4 l3.6 3.6 l-3.6 3.6 l-3.6 -3.6z" fill="#ff00ff"/><path d="M662.2 731.4 l3.6 3.6 l-3.6 3.6 l-3.6 -3.6z" fill="#ff00ff"/><path d="M672.1 741.4 l3.6 3.6 l-3.6 3.6 l-3.6 -3.6z" fill="#ff00ff"/><path d="M682.0 747.3 l3.6 3.6 l-3.6 3.6 l-3.6 -3.6z" fill="#ff00ff"/><path d="M691.9 755.1 l3.6 3.6 l-3.6 3.6 l-3.6 -3.6z" fill="#ff00ff"/><path d="M701.8 736.4 l3.6 3.6 l-3.6 3.6 l-3.6 -3.6z" fill="#ff00ff"/></svg>
<div class="a" style="left:10px;top:398px;width:727px;height:21px;background:#fff"></div>
<div class="t" style="left:26px;top:403px;font-size:14px;font-weight:bold;color:#000;letter-spacing:0.31px">2026 Mar 8, (849)Ara occults UCAC4 376-113792 observed by Toshihiko Horikawa</div>
<div class="c btn" style="left:11px;top:779px;width:138px;height:25px;font-size:14.5px;font-weight:bold;border-color:#d4d4d4">Copy to Clipboard</div>
<div class="c btn" style="left:151px;top:779px;width:95px;height:26px;font-size:14.6px;font-weight:bold;border:1px solid #1a73d0;border-radius:4px">Save to file</div>
<div class="a" style="left:154px;top:782px;width:89px;height:20px;border:1px dotted #000"></div>
<div class="a" style="left:250px;top:778px;width:431px;height:26px;background:#008080"></div>
<div class="t" style="left:257px;top:784px;font-size:14.6px;font-weight:bold;color:#fff;">Zoom</div>
<div class="a" style="left:305px;top:780px;width:152px;height:22px;background:#f0f0f0"></div>
<div class="a" style="left:353px;top:788px;width:17px;height:7px;background:#888"></div>
<div class="a" style="left:467px;top:780px;width:144px;height:22px;background:#f0f0f0"></div>
<div class="a" style="left:530px;top:788px;width:17px;height:7px;background:#888"></div>
<div class="t" style="left:618.5px;top:784px;font-size:14.5px;font-weight:bold;color:#fff;">Position</div>
<div class="a" style="left:681px;top:782px;width:57px;height:27px;background:#f0f0f0"></div>
<div class="a spn" style="left:690px;top:784px;width:22px;height:10px"><div class="tu" style="border-width:0 6px 5px 6px"></div></div>
<div class="a spn" style="left:690px;top:797px;width:22px;height:10px"><div class="td" style="border-width:5px 6px 0 6px"></div></div>
<div class="a spn" style="left:715px;top:784px;width:22px;height:10px"><div class="tu" style="border-width:0 6px 5px 6px"></div></div>
<div class="a spn" style="left:715px;top:797px;width:22px;height:10px"><div class="td" style="border-width:5px 6px 0 6px"></div></div>
<div class="a" style="left:9px;top:808px;width:704px;height:1px;background:#a0a0a0"></div>
<div class="a" style="left:745px;top:31px;width:604px;height:291px;border-left:1px solid #a0a0a0;border-right:1px solid #a0a0a0;border-bottom:1px solid #a0a0a0"></div>
<div class="a" style="left:757px;top:31px;width:591px;height:1px;background:#fff"></div>
<div class="a" style="left:757px;top:37px;width:168px;height:151px;border:1px solid #808080;background:#f0f0f0"></div>
<svg class="a" style="left:0;top:0" width="1360" height="819"><clipPath id="pc"><rect x="758" y="38" width="166" height="149"/></clipPath><g clip-path="url(#pc)"><path d="M765.5 45.5 H917" stroke="#00e000" stroke-width="1.5"/><path d="M765.5 45 V173.5 H917" stroke="#000" stroke-width="1.4" fill="none"/><path d="M765.5 173 V181" stroke="#000" stroke-width="1"/><path d="M781.5 173 V181" stroke="#000" stroke-width="1"/><path d="M797.5 173 V181" stroke="#000" stroke-width="1"/><path d="M813.5 173 V181" stroke="#000" stroke-width="1"/><path d="M829.5 173 V181" stroke="#000" stroke-width="1"/><path d="M845.5 173 V181" stroke="#000" stroke-width="1"/><path d="M861.5 173 V181" stroke="#000" stroke-width="1"/><path d="M877.5 173 V181" stroke="#000" stroke-width="1"/><path d="M893.5 173 V181" stroke="#000" stroke-width="1"/><path d="M909.5 173 V181" stroke="#000" stroke-width="1"/><rect x="765" y="183" width="112" height="5" fill="#ff00ff"/><path d="M765.0 120.9 l3.1 3.1 l-3.1 3.1 l-3.1 -3.1z" fill="none" stroke="#0000ff" stroke-width="1.15"/><path d="M780.8 114.9 l3.1 3.1 l-3.1 3.1 l-3.1 -3.1z" fill="none" stroke="#0000ff" stroke-width="1.15"/><path d="M780.8 118.4 l3.1 3.1 l-3.1 3.1 l-3.1 -3.1z" fill="none" stroke="#0000ff" stroke-width="1.15"/><path d="M780.8 125.9 l3.1 3.1 l-3.1 3.1 l-3.1 -3.1z" fill="none" stroke="#0000ff" stroke-width="1.15"/><path d="M787.6 117.9 l3.1 3.1 l-3.1 3.1 l-3.1 -3.1z" fill="none" stroke="#0000ff" stroke-width="1.15"/><path d="M787.6 129.9 l3.1 3.1 l-3.1 3.1 l-3.1 -3.1z" fill="none" stroke="#0000ff" stroke-width="1.15"/><path d="M787.6 120.9 l3.1 3.1 l-3.1 3.1 l-3.1 -3.1z" fill="none" stroke="#0000ff" stroke-width="1.15"/><path d="M797.0 108.9 l3.1 3.1 l-3.1 3.1 l-3.1 -3.1z" fill="none" stroke="#0000ff" stroke-width="1.15"/><path d="M797.0 118.3 l3.1 3.1 l-3.1 3.1 l-3.1 -3.1z" fill="none" stroke="#0000ff" stroke-width="1.15"/><path d="M797.0 117.3 l3.1 3.1 l-3.1 3.1 l-3.1 -3.1z" fill="none" stroke="#0000ff" stroke-width="1.15"/><path d="M797.0 114.5 l3.1 3.1 l-3.1 3.1 l-3.1 -3.1z" fill="none" stroke="#0000ff" stroke-width="1.15"/><path d="M797.0 109.8 l3.1 3.1 l-3.1 3.1 l-3.1 -3.1z" fill="none" stroke="#0000ff" stroke-width="1.15"/><path d="M797.0 120.1 l3.1 3.1 l-3.1 3.1 l-3.1 -3.1z" fill="none" stroke="#0000ff" stroke-width="1.15"/><path d="M800.8 121.4 l3.1 3.1 l-3.1 3.1 l-3.1 -3.1z" fill="none" stroke="#0000ff" stroke-width="1.15"/><path d="M800.8 115.7 l3.1 3.1 l-3.1 3.1 l-3.1 -3.1z" fill="none" stroke="#0000ff" stroke-width="1.15"/><path d="M800.8 115.6 l3.1 3.1 l-3.1 3.1 l-3.1 -3.1z" fill="none" stroke="#0000ff" stroke-width="1.15"/><path d="M800.8 110.4 l3.1 3.1 l-3.1 3.1 l-3.1 -3.1z" fill="none" stroke="#0000ff" stroke-width="1.15"/><path d="M800.8 106.0 l3.1 3.1 l-3.1 3.1 l-3.1 -3.1z" fill="none" stroke="#0000ff" stroke-width="1.15"/><path d="M800.8 113.0 l3.1 3.1 l-3.1 3.1 l-3.1 -3.1z" fill="none" stroke="#0000ff" stroke-width="1.15"/><path d="M809.5 118.7 l3.1 3.1 l-3.1 3.1 l-3.1 -3.1z" fill="none" stroke="#0000ff" stroke-width="1.15"/><path d="M809.5 107.4 l3.1 3.1 l-3.1 3.1 l-3.1 -3.1z" fill="none" stroke="#0000ff" stroke-width="1.15"/><path d="M809.5 123.3 l3.1 3.1 l-3.1 3.1 l-3.1 -3.1z" fill="none" stroke="#0000ff" stroke-width="1.15"/><path d="M809.5 111.0 l3.1 3.1 l-3.1 3.1 l-3.1 -3.1z" fill="none" stroke="#0000ff" stroke-width="1.15"/><path d="M809.5 111.0 l3.1 3.1 l-3.1 3.1 l-3.1 -3.1z" fill="none" stroke="#0000ff" stroke-width="1.15"/><path d="M809.5 106.8 l3.1 3.1 l-3.1 3.1 l-3.1 -3.1z" fill="none" stroke="#0000ff" stroke-width="1.15"/><path d="M812.6 128.7 l3.1 3.1 l-3.1 3.1 l-3.1 -3.1z" fill="none" stroke="#0000ff" stroke-width="1.15"/><path d="M812.6 122.8 l3.1 3.1 l-3.1 3.1 l-3.1 -3.1z" fill="none" stroke="#0000ff" stroke-width="1.15"/><path d="M812.6 125.9 l3.1 3.1 l-3.1 3.1 l-3.1 -3.1z" fill="none" stroke="#0000ff" stroke-width="1.15"/><path d="M812.6 120.0 l3.1 3.1 l-3.1 3.1 l-3.1 -3.1z" fill="none" stroke="#0000ff" stroke-width="1.15"/><path d="M812.6 106.7 l3.1 3.1 l-3.1 3.1 l-3.1 -3.1z" fill="none" stroke="#0000ff" stroke-width="1.15"/><path d="M812.6 113.4 l3.1 3.1 l-3.1 3.1 l-3.1 -3.1z" fill="none" stroke="#0000ff" stroke-width="1.15"/><path d="M815.8 117.8 l3.1 3.1 l-3.1 3.1 l-3.1 -3.1z" fill="none" stroke="#0000ff" stroke-width="1.15"/><path d="M815.8 108.7 l3.1 3.1 l-3.1 3.1 l-3.1 -3.1z" fill="none" stroke="#0000ff" stroke-width="1.15"/><path d="M815.8 128.6 l3.1 3.1 l-3.1 3.1 l-3.1 -3.1z" fill="none" stroke="#0000ff" stroke-width="1.15"/><path d="M815.8 114.7 l3.1 3.1 l-3.1 3.1 l-3.1 -3.1z" fill="none" stroke="#0000ff" stroke-width="1.15"/><path d="M815.8 109.6 l3.1 3.1 l-3.1 3.1 l-3.1 -3.1z" fill="none" stroke="#0000ff" stroke-width="1.15"/><path d="M815.8 125.4 l3.1 3.1 l-3.1 3.1 l-3.1 -3.1z" fill="none" stroke="#0000ff" stroke-width="1.15"/><path d="M822.6 109.1 l3.1 3.1 l-3.1 3.1 l-3.1 -3.1z" fill="none" stroke="#0000ff" stroke-width="1.15"/><path d="M822.6 130.0 l3.1 3.1 l-3.1 3.1 l-3.1 -3.1z" fill="none" stroke="#0000ff" stroke-width="1.15"/><path d="M822.6 117.7 l3.1 3.1 l-3.1 3.1 l-3.1 -3.1z" fill="none" stroke="#0000ff" stroke-width="1.15"/><path d="M822.6 120.2 l3.1 3.1 l-3.1 3.1 l-3.1 -3.1z" fill="none" stroke="#0000ff" stroke-width="1.15"/><path d="M822.6 114.8 l3.1 3.1 l-3.1 3.1 l-3.1 -3.1z" fill="none" stroke="#0000ff" stroke-width="1.15"/><path d="M822.6 118.5 l3.1 3.1 l-3.1 3.1 l-3.1 -3.1z" fill="none" stroke="#0000ff" stroke-width="1.15"/><path d="M830.8 111.2 l3.1 3.1 l-3.1 3.1 l-3.1 -3.1z" fill="none" stroke="#0000ff" stroke-width="1.15"/><path d="M830.8 107.0 l3.1 3.1 l-3.1 3.1 l-3.1 -3.1z" fill="none" stroke="#0000ff" stroke-width="1.15"/><path d="M830.8 130.6 l3.1 3.1 l-3.1 3.1 l-3.1 -3.1z" fill="none" stroke="#0000ff" stroke-width="1.15"/><path d="M830.8 112.6 l3.1 3.1 l-3.1 3.1 l-3.1 -3.1z" fill="none" stroke="#0000ff" stroke-width="1.15"/><path d="M830.8 128.2 l3.1 3.1 l-3.1 3.1 l-3.1 -3.1z" fill="none" stroke="#0000ff" stroke-width="1.15"/><path d="M830.8 111.9 l3.1 3.1 l-3.1 3.1 l-3.1 -3.1z" fill="none" stroke="#0000ff" stroke-width="1.15"/><path d="M832.6 134.1 l3.1 3.1 l-3.1 3.1 l-3.1 -3.1z" fill="none" stroke="#0000ff" stroke-width="1.15"/><path d="M832.6 131.9 l3.1 3.1 l-3.1 3.1 l-3.1 -3.1z" fill="none" stroke="#0000ff" stroke-width="1.15"/><path d="M832.6 127.9 l3.1 3.1 l-3.1 3.1 l-3.1 -3.1z" fill="none" stroke="#0000ff" stroke-width="1.15"/><path d="M832.6 128.1 l3.1 3.1 l-3.1 3.1 l-3.1 -3.1z" fill="none" stroke="#0000ff" stroke-width="1.15"/><path d="M832.6 122.8 l3.1 3.1 l-3.1 3.1 l-3.1 -3.1z" fill="none" stroke="#0000ff" stroke-width="1.15"/><path d="M832.6 127.1 l3.1 3.1 l-3.1 3.1 l-3.1 -3.1z" fill="none" stroke="#0000ff" stroke-width="1.15"/><path d="M837.0 109.6 l3.1 3.1 l-3.1 3.1 l-3.1 -3.1z" fill="none" stroke="#0000ff" stroke-width="1.15"/><path d="M837.0 120.4 l3.1 3.1 l-3.1 3.1 l-3.1 -3.1z" fill="none" stroke="#0000ff" stroke-width="1.15"/><path d="M837.0 131.1 l3.1 3.1 l-3.1 3.1 l-3.1 -3.1z" fill="none" stroke="#0000ff" stroke-width="1.15"/><path d="M837.0 112.0 l3.1 3.1 l-3.1 3.1 l-3.1 -3.1z" fill="none" stroke="#0000ff" stroke-width="1.15"/><path d="M837.0 134.0 l3.1 3.1 l-3.1 3.1 l-3.1 -3.1z" fill="none" stroke="#0000ff" stroke-width="1.15"/><path d="M837.0 133.0 l3.1 3.1 l-3.1 3.1 l-3.1 -3.1z" fill="none" stroke="#0000ff" stroke-width="1.15"/><path d="M844.5 119.4 l3.1 3.1 l-3.1 3.1 l-3.1 -3.1z" fill="none" stroke="#0000ff" stroke-width="1.15"/><path d="M844.5 117.9 l3.1 3.1 l-3.1 3.1 l-3.1 -3.1z" fill="none" stroke="#0000ff" stroke-width="1.15"/><path d="M844.5 120.7 l3.1 3.1 l-3.1 3.1 l-3.1 -3.1z" fill="none" stroke="#0000ff" stroke-width="1.15"/><path d="M844.5 118.6 l3.1 3.1 l-3.1 3.1 l-3.1 -3.1z" fill="none" stroke="#0000ff" stroke-width="1.15"/><path d="M844.5 138.6 l3.1 3.1 l-3.1 3.1 l-3.1 -3.1z" fill="none" stroke="#0000ff" stroke-width="1.15"/><path d="M844.5 118.6 l3.1 3.1 l-3.1 3.1 l-3.1 -3.1z" fill="none" stroke="#0000ff" stroke-width="1.15"/><path d="M850.0 133.5 l3.1 3.1 l-3.1 3.1 l-3.1 -3.1z" fill="none" stroke="#0000ff" stroke-width="1.15"/><path d="M850.0 131.3 l3.1 3.1 l-3.1 3.1 l-3.1 -3.1z" fill="none" stroke="#0000ff" stroke-width="1.15"/><path d="M850.0 127.1 l3.1 3.1 l-3.1 3.1 l-3.1 -3.1z" fill="none" stroke="#0000ff" stroke-width="1.15"/><path d="M850.0 112.4 l3.1 3.1 l-3.1 3.1 l-3.1 -3.1z" fill="none" stroke="#0000ff" stroke-width="1.15"/><path d="M850.0 123.9 l3.1 3.1 l-3.1 3.1 l-3.1 -3.1z" fill="none" stroke="#0000ff" stroke-width="1.15"/><path d="M850.0 131.1 l3.1 3.1 l-3.1 3.1 l-3.1 -3.1z" fill="none" stroke="#0000ff" stroke-width="1.15"/><path d="M850.0 121.4 l3.1 3.1 l-3.1 3.1 l-3.1 -3.1z" fill="none" stroke="#0000ff" stroke-width="1.15"/><path d="M850.0 114.0 l3.1 3.1 l-3.1 3.1 l-3.1 -3.1z" fill="none" stroke="#0000ff" stroke-width="1.15"/><path d="M857.0 127.8 l3.1 3.1 l-3.1 3.1 l-3.1 -3.1z" fill="none" stroke="#0000ff" stroke-width="1.15"/><path d="M857.0 123.0 l3.1 3.1 l-3.1 3.1 l-3.1 -3.1z" fill="none" stroke="#0000ff" stroke-width="1.15"/><path d="M857.0 128.0 l3.1 3.1 l-3.1 3.1 l-3.1 -3.1z" fill="none" stroke="#0000ff" stroke-width="1.15"/><path d="M857.0 132.4 l3.1 3.1 l-3.1 3.1 l-3.1 -3.1z" fill="none" stroke="#0000ff" stroke-width="1.15"/><path d="M857.0 134.2 l3.1 3.1 l-3.1 3.1 l-3.1 -3.1z" fill="none" stroke="#0000ff" stroke-width="1.15"/><path d="M857.0 123.0 l3.1 3.1 l-3.1 3.1 l-3.1 -3.1z" fill="none" stroke="#0000ff" stroke-width="1.15"/><path d="M857.0 142.1 l3.1 3.1 l-3.1 3.1 l-3.1 -3.1z" fill="none" stroke="#0000ff" stroke-width="1.15"/><path d="M857.0 113.9 l3.1 3.1 l-3.1 3.1 l-3.1 -3.1z" fill="none" stroke="#0000ff" stroke-width="1.15"/><path d="M862.0 129.9 l3.1 3.1 l-3.1 3.1 l-3.1 -3.1z" fill="none" stroke="#0000ff" stroke-width="1.15"/><path d="M862.0 133.5 l3.1 3.1 l-3.1 3.1 l-3.1 -3.1z" fill="none" stroke="#0000ff" stroke-width="1.15"/><path d="M862.0 141.0 l3.1 3.1 l-3.1 3.1 l-3.1 -3.1z" fill="none" stroke="#0000ff" stroke-width="1.15"/><path d="M862.0 135.3 l3.1 3.1 l-3.1 3.1 l-3.1 -3.1z" fill="none" stroke="#0000ff" stroke-width="1.15"/><path d="M862.0 131.9 l3.1 3.1 l-3.1 3.1 l-3.1 -3.1z" fill="none" stroke="#0000ff" stroke-width="1.15"/><path d="M862.0 125.2 l3.1 3.1 l-3.1 3.1 l-3.1 -3.1z" fill="none" stroke="#0000ff" stroke-width="1.15"/><path d="M862.0 127.2 l3.1 3.1 l-3.1 3.1 l-3.1 -3.1z" fill="none" stroke="#0000ff" stroke-width="1.15"/><path d="M865.8 122.7 l3.1 3.1 l-3.1 3.1 l-3.1 -3.1z" fill="none" stroke="#0000ff" stroke-width="1.15"/><path d="M865.8 136.8 l3.1 3.1 l-3.1 3.1 l-3.1 -3.1z" fill="none" stroke="#0000ff" stroke-width="1.15"/><path d="M865.8 129.3 l3.1 3.1 l-3.1 3.1 l-3.1 -3.1z" fill="none" stroke="#0000ff" stroke-width="1.15"/><path d="M865.8 146.2 l3.1 3.1 l-3.1 3.1 l-3.1 -3.1z" fill="none" stroke="#0000ff" stroke-width="1.15"/><path d="M865.8 129.9 l3.1 3.1 l-3.1 3.1 l-3.1 -3.1z" fill="none" stroke="#0000ff" stroke-width="1.15"/><path d="M865.8 120.4 l3.1 3.1 l-3.1 3.1 l-3.1 -3.1z" fill="none" stroke="#0000ff" stroke-width="1.15"/><path d="M865.8 124.2 l3.1 3.1 l-3.1 3.1 l-3.1 -3.1z" fill="none" stroke="#0000ff" stroke-width="1.15"/><path d="M865.8 110.5 l3.1 3.1 l-3.1 3.1 l-3.1 -3.1z" fill="none" stroke="#0000ff" stroke-width="1.15"/><path d="M872.0 131.1 l3.1 3.1 l-3.1 3.1 l-3.1 -3.1z" fill="none" stroke="#0000ff" stroke-width="1.15"/><path d="M872.0 143.2 l3.1 3.1 l-3.1 3.1 l-3.1 -3.1z" fill="none" stroke="#0000ff" stroke-width="1.15"/><path d="M872.0 132.1 l3.1 3.1 l-3.1 3.1 l-3.1 -3.1z" fill="none" stroke="#0000ff" stroke-width="1.15"/><path d="M872.0 132.8 l3.1 3.1 l-3.1 3.1 l-3.1 -3.1z" fill="none" stroke="#0000ff" stroke-width="1.15"/><path d="M872.0 134.4 l3.1 3.1 l-3.1 3.1 l-3.1 -3.1z" fill="none" stroke="#0000ff" stroke-width="1.15"/><path d="M872.0 121.2 l3.1 3.1 l-3.1 3.1 l-3.1 -3.1z" fill="none" stroke="#0000ff" stroke-width="1.15"/><path d="M872.0 119.5 l3.1 3.1 l-3.1 3.1 l-3.1 -3.1z" fill="none" stroke="#0000ff" stroke-width="1.15"/><path d="M872.0 108.8 l3.1 3.1 l-3.1 3.1 l-3.1 -3.1z" fill="none" stroke="#0000ff" stroke-width="1.15"/><path d="M877.6 132.1 l3.1 3.1 l-3.1 3.1 l-3.1 -3.1z" fill="none" stroke="#0000ff" stroke-width="1.15"/><path d="M877.6 129.3 l3.1 3.1 l-3.1 3.1 l-3.1 -3.1z" fill="none" stroke="#0000ff" stroke-width="1.15"/><path d="M877.6 137.0 l3.1 3.1 l-3.1 3.1 l-3.1 -3.1z" fill="none" stroke="#0000ff" stroke-width="1.15"/><path d="M877.6 132.0 l3.1 3.1 l-3.1 3.1 l-3.1 -3.1z" fill="none" stroke="#0000ff" stroke-width="1.15"/><path d="M877.6 132.9 l3.1 3.1 l-3.1 3.1 l-3.1 -3.1z" fill="none" stroke="#0000ff" stroke-width="1.15"/><path d="M877.6 124.1 l3.1 3.1 l-3.1 3.1 l-3.1 -3.1z" fill="none" stroke="#0000ff" stroke-width="1.15"/><path d="M877.6 141.8 l3.1 3.1 l-3.1 3.1 l-3.1 -3.1z" fill="none" stroke="#0000ff" stroke-width="1.15"/><path d="M880.8 130.7 l3.1 3.1 l-3.1 3.1 l-3.1 -3.1z" fill="none" stroke="#0000ff" stroke-width="1.15"/><path d="M880.8 124.1 l3.1 3.1 l-3.1 3.1 l-3.1 -3.1z" fill="none" stroke="#0000ff" stroke-width="1.15"/><path d="M880.8 130.7 l3.1 3.1 l-3.1 3.1 l-3.1 -3.1z" fill="none" stroke="#0000ff" stroke-width="1.15"/><path d="M880.8 146.1 l3.1 3.1 l-3.1 3.1 l-3.1 -3.1z" fill="none" stroke="#0000ff" stroke-width="1.15"/><path d="M880.8 121.3 l3.1 3.1 l-3.1 3.1 l-3.1 -3.1z" fill="none" stroke="#0000ff" stroke-width="1.15"/><path d="M880.8 129.3 l3.1 3.1 l-3.1 3.1 l-3.1 -3.1z" fill="none" stroke="#0000ff" stroke-width="1.15"/><path d="M880.8 135.0 l3.1 3.1 l-3.1 3.1 l-3.1 -3.1z" fill="none" stroke="#0000ff" stroke-width="1.15"/><path d="M887.0 131.6 l3.1 3.1 l-3.1 3.1 l-3.1 -3.1z" fill="none" stroke="#0000ff" stroke-width="1.15"/><path d="M887.0 134.4 l3.1 3.1 l-3.1 3.1 l-3.1 -3.1z" fill="none" stroke="#0000ff" stroke-width="1.15"/><path d="M887.0 119.0 l3.1 3.1 l-3.1 3.1 l-3.1 -3.1z" fill="none" stroke="#0000ff" stroke-width="1.15"/><path d="M887.0 125.8 l3.1 3.1 l-3.1 3.1 l-3.1 -3.1z" fill="none" stroke="#0000ff" stroke-width="1.15"/><path d="M887.0 127.1 l3.1 3.1 l-3.1 3.1 l-3.1 -3.1z" fill="none" stroke="#0000ff" stroke-width="1.15"/><path d="M887.0 120.7 l3.1 3.1 l-3.1 3.1 l-3.1 -3.1z" fill="none" stroke="#0000ff" stroke-width="1.15"/><path d="M887.0 125.2 l3.1 3.1 l-3.1 3.1 l-3.1 -3.1z" fill="none" stroke="#0000ff" stroke-width="1.15"/><path d="M887.0 112.9 l3.1 3.1 l-3.1 3.1 l-3.1 -3.1z" fill="none" stroke="#0000ff" stroke-width="1.15"/><path d="M893.9 129.2 l3.1 3.1 l-3.1 3.1 l-3.1 -3.1z" fill="none" stroke="#0000ff" stroke-width="1.15"/><path d="M893.9 141.0 l3.1 3.1 l-3.1 3.1 l-3.1 -3.1z" fill="none" stroke="#0000ff" stroke-width="1.15"/><path d="M893.9 140.0 l3.1 3.1 l-3.1 3.1 l-3.1 -3.1z" fill="none" stroke="#0000ff" stroke-width="1.15"/><path d="M893.9 131.5 l3.1 3.1 l-3.1 3.1 l-3.1 -3.1z" fill="none" stroke="#0000ff" stroke-width="1.15"/><path d="M893.9 132.2 l3.1 3.1 l-3.1 3.1 l-3.1 -3.1z" fill="none" stroke="#0000ff" stroke-width="1.15"/><path d="M893.9 130.5 l3.1 3.1 l-3.1 3.1 l-3.1 -3.1z" fill="none" stroke="#0000ff" stroke-width="1.15"/><path d="M893.9 123.7 l3.1 3.1 l-3.1 3.1 l-3.1 -3.1z" fill="none" stroke="#0000ff" stroke-width="1.15"/><path d="M897.0 126.1 l3.1 3.1 l-3.1 3.1 l-3.1 -3.1z" fill="none" stroke="#0000ff" stroke-width="1.15"/><path d="M897.0 126.9 l3.1 3.1 l-3.1 3.1 l-3.1 -3.1z" fill="none" stroke="#0000ff" stroke-width="1.15"/><path d="M897.0 128.6 l3.1 3.1 l-3.1 3.1 l-3.1 -3.1z" fill="none" stroke="#0000ff" stroke-width="1.15"/><path d="M897.0 118.3 l3.1 3.1 l-3.1 3.1 l-3.1 -3.1z" fill="none" stroke="#0000ff" stroke-width="1.15"/><path d="M897.0 139.4 l3.1 3.1 l-3.1 3.1 l-3.1 -3.1z" fill="none" stroke="#0000ff" stroke-width="1.15"/><path d="M897.0 133.6 l3.1 3.1 l-3.1 3.1 l-3.1 -3.1z" fill="none" stroke="#0000ff" stroke-width="1.15"/><path d="M897.0 129.1 l3.1 3.1 l-3.1 3.1 l-3.1 -3.1z" fill="none" stroke="#0000ff" stroke-width="1.15"/><path d="M897.0 106.3 l3.1 3.1 l-3.1 3.1 l-3.1 -3.1z" fill="none" stroke="#0000ff" stroke-width="1.15"/><path d="M902.0 137.3 l3.1 3.1 l-3.1 3.1 l-3.1 -3.1z" fill="none" stroke="#0000ff" stroke-width="1.15"/><path d="M902.0 131.9 l3.1 3.1 l-3.1 3.1 l-3.1 -3.1z" fill="none" stroke="#0000ff" stroke-width="1.15"/><path d="M902.0 138.5 l3.1 3.1 l-3.1 3.1 l-3.1 -3.1z" fill="none" stroke="#0000ff" stroke-width="1.15"/><path d="M902.0 140.2 l3.1 3.1 l-3.1 3.1 l-3.1 -3.1z" fill="none" stroke="#0000ff" stroke-width="1.15"/><path d="M902.0 129.2 l3.1 3.1 l-3.1 3.1 l-3.1 -3.1z" fill="none" stroke="#0000ff" stroke-width="1.15"/><path d="M902.0 128.3 l3.1 3.1 l-3.1 3.1 l-3.1 -3.1z" fill="none" stroke="#0000ff" stroke-width="1.15"/><path d="M902.0 125.7 l3.1 3.1 l-3.1 3.1 l-3.1 -3.1z" fill="none" stroke="#0000ff" stroke-width="1.15"/><path d="M902.0 108.2 l3.1 3.1 l-3.1 3.1 l-3.1 -3.1z" fill="none" stroke="#0000ff" stroke-width="1.15"/><path d="M907.6 129.6 l3.1 3.1 l-3.1 3.1 l-3.1 -3.1z" fill="none" stroke="#0000ff" stroke-width="1.15"/><path d="M907.6 132.8 l3.1 3.1 l-3.1 3.1 l-3.1 -3.1z" fill="none" stroke="#0000ff" stroke-width="1.15"/><path d="M907.6 134.2 l3.1 3.1 l-3.1 3.1 l-3.1 -3.1z" fill="none" stroke="#0000ff" stroke-width="1.15"/><path d="M907.6 124.1 l3.1 3.1 l-3.1 3.1 l-3.1 -3.1z" fill="none" stroke="#0000ff" stroke-width="1.15"/><path d="M907.6 137.5 l3.1 3.1 l-3.1 3.1 l-3.1 -3.1z" fill="none" stroke="#0000ff" stroke-width="1.15"/><path d="M907.6 129.1 l3.1 3.1 l-3.1 3.1 l-3.1 -3.1z" fill="none" stroke="#0000ff" stroke-width="1.15"/><path d="M907.6 130.3 l3.1 3.1 l-3.1 3.1 l-3.1 -3.1z" fill="none" stroke="#0000ff" stroke-width="1.15"/><path d="M912.6 138.2 l3.1 3.1 l-3.1 3.1 l-3.1 -3.1z" fill="none" stroke="#0000ff" stroke-width="1.15"/><path d="M912.6 123.5 l3.1 3.1 l-3.1 3.1 l-3.1 -3.1z" fill="none" stroke="#0000ff" stroke-width="1.15"/><path d="M912.6 131.1 l3.1 3.1 l-3.1 3.1 l-3.1 -3.1z" fill="none" stroke="#0000ff" stroke-width="1.15"/><path d="M912.6 130.2 l3.1 3.1 l-3.1 3.1 l-3.1 -3.1z" fill="none" stroke="#0000ff" stroke-width="1.15"/><path d="M912.6 128.8 l3.1 3.1 l-3.1 3.1 l-3.1 -3.1z" fill="none" stroke="#0000ff" stroke-width="1.15"/><path d="M912.6 131.4 l3.1 3.1 l-3.1 3.1 l-3.1 -3.1z" fill="none" stroke="#0000ff" stroke-width="1.15"/><path d="M912.6 131.2 l3.1 3.1 l-3.1 3.1 l-3.1 -3.1z" fill="none" stroke="#0000ff" stroke-width="1.15"/><path d="M917.0 127.2 l3.1 3.1 l-3.1 3.1 l-3.1 -3.1z" fill="none" stroke="#0000ff" stroke-width="1.15"/><path d="M917.0 130.7 l3.1 3.1 l-3.1 3.1 l-3.1 -3.1z" fill="none" stroke="#0000ff" stroke-width="1.15"/><path d="M917.0 140.2 l3.1 3.1 l-3.1 3.1 l-3.1 -3.1z" fill="none" stroke="#0000ff" stroke-width="1.15"/><path d="M917.0 130.2 l3.1 3.1 l-3.1 3.1 l-3.1 -3.1z" fill="none" stroke="#0000ff" stroke-width="1.15"/><path d="M917.0 132.5 l3.1 3.1 l-3.1 3.1 l-3.1 -3.1z" fill="none" stroke="#0000ff" stroke-width="1.15"/><path d="M917.0 126.9 l3.1 3.1 l-3.1 3.1 l-3.1 -3.1z" fill="none" stroke="#0000ff" stroke-width="1.15"/><path d="M917.0 134.2 l3.1 3.1 l-3.1 3.1 l-3.1 -3.1z" fill="none" stroke="#0000ff" stroke-width="1.15"/><path d="M923.2 128.9 l3.1 3.1 l-3.1 3.1 l-3.1 -3.1z" fill="none" stroke="#0000ff" stroke-width="1.15"/><path d="M923.2 137.7 l3.1 3.1 l-3.1 3.1 l-3.1 -3.1z" fill="none" stroke="#0000ff" stroke-width="1.15"/><path d="M923.2 117.0 l3.1 3.1 l-3.1 3.1 l-3.1 -3.1z" fill="none" stroke="#0000ff" stroke-width="1.15"/><path d="M923.2 126.4 l3.1 3.1 l-3.1 3.1 l-3.1 -3.1z" fill="none" stroke="#0000ff" stroke-width="1.15"/><path d="M923.2 137.5 l3.1 3.1 l-3.1 3.1 l-3.1 -3.1z" fill="none" stroke="#0000ff" stroke-width="1.15"/><path d="M923.2 135.6 l3.1 3.1 l-3.1 3.1 l-3.1 -3.1z" fill="none" stroke="#0000ff" stroke-width="1.15"/><path d="M923.2 121.1 l3.1 3.1 l-3.1 3.1 l-3.1 -3.1z" fill="none" stroke="#0000ff" stroke-width="1.15"/><path d="M765.5 116.5 H772 V117.5 H778 L790 121 L815 131 L842 137.5 H924" stroke="#ff0000" stroke-width="1.3" fill="none"/></g></svg>
<div class="a" style="left:933px;top:47px;width:181px;height:31px;border:1px solid #d8d8d8;border-top-color:#d0d0d0"></div>
<div class="a" style="left:940px;top:40px;width:66px;height:14px;background:#f0f0f0"></div>
<div class="t" style="left:942px;top:41px;font-size:13px;font-weight:normal;color:#000;">BKG shape</div>
<div class="a" style="left:941px;top:58px;width:70px;height:21px;background:#f0f0f0"></div>
<div class="a" style="left:1011px;top:58px;width:0px;height:0px;"></div>
<div class="a" style="left:1020px;top:58px;width:78px;height:21px;background:#f0f0f0"></div>
<div class="a" style="left:941px;top:61px;width:13px;height:13px;border:1px solid #333;border-radius:50%;background:#fff"></div>
<div class="t" style="left:957px;top:62px;font-size:13px;font-weight:normal;color:#000;">Standard</div>
<div class="a" style="left:1019.5px;top:61px;width:13px;height:13px;border-radius:50%;background:#0a64c8"></div>
<div class="a" style="left:1023.5px;top:65px;width:5px;height:5px;border-radius:50%;background:#fff"></div>
<div class="t" style="left:1036px;top:62px;font-size:13px;font-weight:normal;color:#000;">LunarLimb</div>
<div class="a" style="left:958px;top:85px;width:26px;height:25px;background:#fff;border-bottom:1px solid #7a7a7a"></div>
<div class="t" style="left:962px;top:88.5px;font-size:14px;font-weight:bold;color:#000;">5</div>
<div class="a spn" style="left:992px;top:84px;width:15px;height:11px"><div class="tu" style="border-width:0 4px 3px 4px"></div></div>
<div class="a spn" style="left:992px;top:99px;width:15px;height:12px"><div class="td" style="border-width:3px 4px 0 4px"></div></div>
<div class="a" style="left:1011px;top:87px;width:96px;height:1px;background:#fff"></div>
<div class="a" style="left:1050px;top:95px;width:17px;height:8px;background:#888"></div>
<div class="t" style="left:1002px;top:118px;font-size:12px;font-weight:normal;color:#000;">Background</div>
<div class="t" style="left:938px;top:130px;font-size:12px;font-weight:normal;color:#000;">Aperture</div>
<div class="t" style="left:996px;top:130px;font-size:12px;font-weight:normal;color:#000;">Inner</div>
<div class="t" style="left:1045px;top:130px;font-size:12px;font-weight:normal;color:#000;">Outer</div>
<div class="a" style="left:946px;top:145px;width:19px;height:25px;background:#fff;border-bottom:1px solid #7a7a7a"></div>
<div class="t" style="left:947px;top:148.3px;font-size:14px;font-weight:bold;color:#000;">4</div>
<div class="a spn" style="left:967px;top:142px;width:21px;height:11px"><div class="tu" style="border-width:0 6px 5px 6px"></div></div>
<div class="a spn" style="left:967px;top:157px;width:21px;height:12px"><div class="td" style="border-width:5px 6px 0 6px"></div></div>
<div class="a" style="left:997px;top:145px;width:23px;height:25px;background:#fff;border-bottom:1px solid #7a7a7a"></div>
<div class="t" style="left:999px;top:148.3px;font-size:14px;font-weight:bold;color:#000;">9</div>
<div class="a spn" style="left:1023px;top:142px;width:21px;height:11px"><div class="tu" style="border-width:0 6px 5px 6px"></div></div>
<div class="a spn" style="left:1023px;top:157px;width:21px;height:12px"><div class="td" style="border-width:5px 6px 0 6px"></div></div>
<div class="a" style="left:1045px;top:145px;width:24px;height:25px;background:#fff;border-bottom:1px solid #7a7a7a"></div>
<div class="t" style="left:1047px;top:148.3px;font-size:14px;font-weight:bold;color:#000;">20</div>
<div class="a spn" style="left:1070px;top:142px;width:19px;height:11px"><div class="tu" style="border-width:0 6px 5px 6px"></div></div>
<div class="a spn" style="left:1070px;top:157px;width:19px;height:12px"><div class="td" style="border-width:5px 6px 0 6px"></div></div>
<div class="t" style="left:1117px;top:55px;font-size:14.3px;font-weight:bold;color:#000;">Image to</div>
<div class="c btn" style="left:1183px;top:40px;width:74px;height:17px;font-size:14.7px;font-weight:bold;border-color:#d6d6d6">File</div>
<div class="c btn" style="left:1180px;top:61px;width:77px;height:21px;font-size:14.5px;font-weight:bold;border-color:#d6d6d6">Clipboard</div>
<div class="a" style="left:1270px;top:54px;width:13px;height:12px;border:1px solid #333;border-radius:2px;background:#fff"></div>
<div class="t" style="left:1288px;top:41px;font-size:11.7px;font-weight:bold;color:#000;">Hide</div>
<div class="t" style="left:1286.5px;top:54px;font-size:11.7px;font-weight:bold;color:#000;">Measure</div>
<div class="t" style="left:1287.5px;top:66px;font-size:11.7px;font-weight:bold;color:#000;">region</div>
<div class="a" style="left:1122px;top:90px;width:13px;height:13px;border-radius:2px;background:#0a5fc0"></div>
<svg class="a" style="left:1122px;top:90px" width="13" height="13"><path d="M3.5 6.8 L5.7 9 L9.8 4.5" stroke="#fff" stroke-width="1" fill="none"/></svg>
<div class="t" style="left:1139px;top:90.5px;font-size:12px;font-weight:bold;color:#000;">Track to star image / peak</div>
<div class="t" style="left:1121px;top:107px;font-size:12.3px;font-weight:normal;color:#111;">Tracking radius</div>
<div class="a" style="left:1222px;top:107px;width:48px;height:12px;border-bottom:1px solid #888;border-right:1px solid #bbb;border-left:1px solid #e8e8e8"></div>
<div class="t" style="left:1229px;top:106px;font-size:13px;font-weight:normal;color:#111;">Track</div>
<div class="a" style="left:1140px;top:122px;width:24px;height:25px;background:#fff;border-bottom:1px solid #7a7a7a"></div>
<div class="t" style="left:1143px;top:126px;font-size:14px;font-weight:bold;color:#000;">6</div>
<div class="a spn" style="left:1168px;top:122px;width:15px;height:12px"><div class="tu" style="border-width:0 4px 3px 4px"></div></div>
<div class="a spn" style="left:1168px;top:138px;width:15px;height:9px"><div class="td" style="border-width:3px 4px 0 4px"></div></div>
<div class="a" style="left:1198px;top:122px;width:79px;height:24px;background:#fff;border:1px solid #7a7a7a"></div>
<div class="t" style="left:1205px;top:127px;font-size:14px;font-weight:normal;color:#000;">Drift</div>
<svg class="a" style="left:1262px;top:131px" width="10" height="6"><path d="M1 1 L5 5 L9 1" stroke="#444" fill="none" stroke-width="1"/></svg>
<div class="t" style="left:1283px;top:133px;font-size:12.6px;font-weight:normal;color:#111;">Tolerance</div>
<div class="a" style="left:1137px;top:148px;width:142px;height:26px;background:#fff;border:1px solid #7a7a7a"></div>
<div class="t" style="left:1144.5px;top:153px;font-size:14.6px;font-weight:bold;color:#000;">Linked tracking</div>
<svg class="a" style="left:1262px;top:158px" width="10" height="6"><path d="M1 1 L5 5 L9 1" stroke="#444" fill="none" stroke-width="1"/></svg>
<div class="a" style="left:1283px;top:152px;width:28px;height:25px;background:#fff;border-bottom:1px solid #7a7a7a"></div>
<div class="t" style="left:1286px;top:155.5px;font-size:14px;font-weight:bold;color:#000;">3</div>
<div class="a spn" style="left:1315px;top:152px;width:21px;height:12px"><div class="tu" style="border-width:0 6px 5px 6px"></div></div>
<div class="a spn" style="left:1315px;top:168px;width:21px;height:12px"><div class="td" style="border-width:5px 6px 0 6px"></div></div>
<div class="a" style="left:1027px;top:182px;width:320px;height:30px;background:#008080;border-bottom:1px solid #7a9a9a"></div>
<div class="t" style="left:1035px;top:187px;font-size:16px;font-weight:bold;color:#fff;">Current operation</div>
<div class="a" style="left:1180px;top:185px;width:162px;height:24px;background:#fff;border:1px solid #ccc"></div>
<div class="a" style="left:1182px;top:187px;width:140px;height:19px;background:#aaffff"></div>
<div class="t" style="left:1185.5px;top:189.5px;font-size:13.2px;font-weight:bold;color:#000;">A_pply to measure</div>
<svg class="a" style="left:1327px;top:195px" width="10" height="6"><path d="M1 1 L5 5 L9 1" stroke="#444" fill="none" stroke-width="1"/></svg>
<div class="t" style="left:758.7px;top:197px;font-size:12.4px;font-weight:bold;color:#000;">Stretch</div>
<div class="a" style="left:808px;top:193px;width:122px;height:20px;border:2px solid #f5b04a;background:#f0f0f0"></div>
<div class="a" style="left:827px;top:203px;width:16px;height:1px;background:#777"></div>
<div class="t" style="left:939px;top:191px;font-size:12px;font-weight:bold;color:#000;transform:scaleX(0.93);transform-origin:left">FWHM</div>
<div class="a" style="left:978px;top:186px;width:39px;height:22px;background:#fff;border-bottom:1px solid #7a7a7a"></div>
<div class="t" style="left:981px;top:190px;font-size:13px;font-weight:bold;color:#000;">10.10</div>
<div class="a" style="left:762px;top:216px;width:78px;height:25px;background:#aaffff;border-bottom:1px solid #7a7a7a"></div>
<div class="t" style="left:764px;top:222px;font-size:14px;font-weight:normal;color:#222;">2026.03.08</div>
<div class="t" style="left:849px;top:225px;font-size:14px;font-weight:bold;color:#000;transform:scaleX(0.885);transform-origin:left">Exposure</div>
<div class="a" style="left:909px;top:216px;width:68px;height:26px;background:#aaffff;border-bottom:1px solid #7a7a7a"></div>
<div class="t" style="left:912px;top:220px;font-size:14px;font-weight:bold;color:#000;">490.0005</div>
<div class="t" style="left:981px;top:228px;font-size:14px;font-weight:bold;color:#000;">msec</div>
<div class="a" style="left:762px;top:252px;width:26px;height:24px;background:#aaffff"></div>
<div class="t" style="left:764.5px;top:254.5px;font-size:15.8px;font-weight:bold;color:#000;">19</div>
<div class="a" style="left:790px;top:252px;width:21px;height:24px;background:#aaffff"></div>
<div class="t" style="left:792.5px;top:254.5px;font-size:15.8px;font-weight:bold;color:#000;">15</div>
<div class="a" style="left:815px;top:252px;width:65px;height:24px;background:#aaffff"></div>
<div class="t" style="left:817.5px;top:254.5px;font-size:15.8px;font-weight:bold;color:#000;">02.4614</div>
<div class="a" style="left:886px;top:252px;width:70px;height:24px;background:#aaffff"></div>
<div class="t" style="left:888.5px;top:254.5px;font-size:15.8px;font-weight:bold;color:#000;">02.7064</div>
<div class="a" style="left:961px;top:252px;width:70px;height:24px;background:#aaffff"></div>
<div class="t" style="left:963.5px;top:254.5px;font-size:15.8px;font-weight:bold;color:#000;">02.9514</div>
<div class="a" style="left:757px;top:276px;width:472px;height:24px;background:#fff;border:1px solid #707070;border-left:none"></div>
<div class="t" style="left:758px;top:281px;font-size:14.4px;font-weight:normal;color:#000;">F:\20260308-(849)Ara-Horikawa\04_14_02.ser</div>
<div class="a" style="left:770px;top:308px;width:215px;height:2px;background:#8a8a8a"></div>
<div class="a" style="left:1039px;top:226px;width:58px;height:47px;background:#fbfbfb;border:1px solid #d8d8d8;border-radius:4px"></div>
<svg class="a" style="left:0;top:0" width="1360" height="819"><rect x="1044" y="226.5" width="47" height="48" fill="#c8c0e8"/><rect x="1054.7" y="252" width="3.3" height="1.2" fill="#fff" opacity="0.9"/><rect x="1071.2" y="255" width="2.2" height="1.2" fill="#fff" opacity="0.9"/><rect x="1044.6" y="265" width="2.9" height="1.2" fill="#fff" opacity="0.9"/><rect x="1054.5" y="272" width="3.6" height="1.2" fill="#fff" opacity="0.9"/><rect x="1081.6" y="248" width="4.2" height="1.2" fill="#fff" opacity="0.9"/><rect x="1050.8" y="256" width="5.0" height="1.2" fill="#fff" opacity="0.9"/><rect x="1067.5" y="261" width="4.3" height="1.2" fill="#fff" opacity="0.9"/><rect x="1046.9" y="261" width="4.1" height="1.2" fill="#fff" opacity="0.9"/><rect x="1057.6" y="228" width="5.0" height="1.2" fill="#fff" opacity="0.9"/><rect x="1065.3" y="260" width="5.1" height="1.2" fill="#fff" opacity="0.9"/><rect x="1076.1" y="269" width="3.4" height="1.2" fill="#fff" opacity="0.9"/><rect x="1080.0" y="247" width="5.3" height="1.2" fill="#fff" opacity="0.9"/><rect x="1083.5" y="231" width="2.5" height="1.2" fill="#fff" opacity="0.9"/><rect x="1053.8" y="271" width="3.5" height="1.2" fill="#fff" opacity="0.9"/><rect x="1072.2" y="240" width="3.8" height="1.2" fill="#fff" opacity="0.9"/><rect x="1061.4" y="243" width="4.0" height="1.2" fill="#fff" opacity="0.9"/><rect x="1070.3" y="268" width="4.4" height="1.2" fill="#fff" opacity="0.9"/><rect x="1085.8" y="266" width="5.5" height="1.2" fill="#fff" opacity="0.9"/><rect x="1074.2" y="234" width="5.0" height="1.2" fill="#fff" opacity="0.9"/><rect x="1087.4" y="268" width="4.0" height="1.2" fill="#fff" opacity="0.9"/><rect x="1076.1" y="236" width="4.9" height="1.2" fill="#fff" opacity="0.9"/><rect x="1069.8" y="240" width="2.2" height="1.2" fill="#fff" opacity="0.9"/><rect x="1082.4" y="272" width="2.3" height="1.2" fill="#fff" opacity="0.9"/><rect x="1080.0" y="245" width="2.5" height="1.2" fill="#fff" opacity="0.9"/><rect x="1057.2" y="262" width="5.1" height="1.2" fill="#fff" opacity="0.9"/><rect x="1046.0" y="255" width="2.2" height="1.2" fill="#fff" opacity="0.9"/><rect x="1076.3" y="242" width="5.1" height="1.2" fill="#fff" opacity="0.9"/><rect x="1088.1" y="250" width="5.5" height="1.2" fill="#fff" opacity="0.9"/><rect x="1057.9" y="230" width="4.1" height="1.2" fill="#fff" opacity="0.9"/><rect x="1045.4" y="236" width="3.4" height="1.2" fill="#fff" opacity="0.9"/><rect x="1071.5" y="234" width="2.1" height="1.2" fill="#fff" opacity="0.9"/><rect x="1083.1" y="241" width="5.4" height="1.2" fill="#fff" opacity="0.9"/><rect x="1084.3" y="244" width="3.6" height="1.2" fill="#fff" opacity="0.9"/><rect x="1067.4" y="256" width="4.1" height="1.2" fill="#fff" opacity="0.9"/><rect x="1069.2" y="255" width="5.3" height="1.2" fill="#fff" opacity="0.9"/><rect x="1066.8" y="246" width="4.5" height="1.2" fill="#fff" opacity="0.9"/><rect x="1054.7" y="240" width="5.4" height="1.2" fill="#fff" opacity="0.9"/><rect x="1067.5" y="252" width="2.0" height="1.2" fill="#fff" opacity="0.9"/><rect x="1062.7" y="253" width="2.1" height="1.2" fill="#fff" opacity="0.9"/><rect x="1071.7" y="256" width="2.2" height="1.2" fill="#fff" opacity="0.9"/><rect x="1072.2" y="248" width="4.4" height="1.2" fill="#fff" opacity="0.9"/><rect x="1059.9" y="259" width="4.6" height="1.2" fill="#fff" opacity="0.9"/><rect x="1045.0" y="229" width="4.4" height="1.2" fill="#fff" opacity="0.9"/><rect x="1087.3" y="238" width="3.6" height="1.2" fill="#fff" opacity="0.9"/><rect x="1070.7" y="241" width="3.3" height="1.2" fill="#fff" opacity="0.9"/><rect x="1058.1" y="243" width="4.1" height="1.2" fill="#fff" opacity="0.9"/><rect x="1057.5" y="244" width="4.7" height="1.2" fill="#fff" opacity="0.9"/><rect x="1045.2" y="253" width="4.6" height="1.2" fill="#fff" opacity="0.9"/><rect x="1058.0" y="237" width="4.8" height="1.2" fill="#fff" opacity="0.9"/><rect x="1054.7" y="235" width="3.5" height="1.2" fill="#fff" opacity="0.9"/><rect x="1075.4" y="231" width="3.1" height="1.2" fill="#fff" opacity="0.9"/><rect x="1059.0" y="265" width="3.5" height="1.2" fill="#fff" opacity="0.9"/><rect x="1082.5" y="234" width="3.2" height="1.2" fill="#fff" opacity="0.9"/><rect x="1073.3" y="267" width="3.6" height="1.2" fill="#fff" opacity="0.9"/><rect x="1054.1" y="232" width="3.9" height="1.2" fill="#fff" opacity="0.9"/><rect x="1052.6" y="264" width="4.9" height="1.2" fill="#fff" opacity="0.9"/><rect x="1052.3" y="239" width="4.8" height="1.2" fill="#fff" opacity="0.9"/><rect x="1072.9" y="264" width="3.2" height="1.2" fill="#fff" opacity="0.9"/><rect x="1049.8" y="240" width="4.8" height="1.2" fill="#fff" opacity="0.9"/><rect x="1056.2" y="242" width="3.5" height="1.2" fill="#fff" opacity="0.9"/><rect x="1062.9" y="245" width="5.2" height="1.2" fill="#fff" opacity="0.9"/><rect x="1051.0" y="227" width="5.3" height="1.2" fill="#fff" opacity="0.9"/><rect x="1083.6" y="272" width="3.5" height="1.2" fill="#fff" opacity="0.9"/><rect x="1086.8" y="269" width="2.8" height="1.2" fill="#fff" opacity="0.9"/><rect x="1077.5" y="265" width="4.3" height="1.2" fill="#fff" opacity="0.9"/><rect x="1067.4" y="240" width="3.2" height="1.2" fill="#fff" opacity="0.9"/><rect x="1054.2" y="230" width="4.1" height="1.2" fill="#fff" opacity="0.9"/><rect x="1056.9" y="264" width="2.2" height="1.2" fill="#fff" opacity="0.9"/><rect x="1084.7" y="258" width="5.2" height="1.2" fill="#fff" opacity="0.9"/><rect x="1084.3" y="268" width="4.0" height="1.2" fill="#fff" opacity="0.9"/><rect x="1044.6" y="261" width="2.6" height="1.2" fill="#fff" opacity="0.9"/><rect x="1057.5" y="257" width="3.8" height="1.2" fill="#fff" opacity="0.9"/><rect x="1062.6" y="270" width="4.1" height="1.2" fill="#fff" opacity="0.9"/><rect x="1059.4" y="238" width="5.0" height="1.2" fill="#fff" opacity="0.9"/><rect x="1065.5" y="262" width="3.2" height="1.2" fill="#fff" opacity="0.9"/><rect x="1052.9" y="251" width="4.9" height="1.2" fill="#fff" opacity="0.9"/><rect x="1051.7" y="263" width="5.2" height="1.2" fill="#fff" opacity="0.9"/><rect x="1080.3" y="264" width="2.0" height="1.2" fill="#fff" opacity="0.9"/><rect x="1072.3" y="266" width="2.2" height="1.2" fill="#fff" opacity="0.9"/><rect x="1056.2" y="239" width="3.8" height="1.2" fill="#fff" opacity="0.9"/><rect x="1063.0" y="248" width="4.7" height="1.2" fill="#fff" opacity="0.9"/><rect x="1044.1" y="229" width="2.4" height="1.2" fill="#fff" opacity="0.9"/><rect x="1049.6" y="230" width="5.4" height="1.2" fill="#fff" opacity="0.9"/><rect x="1082.5" y="230" width="3.8" height="1.2" fill="#fff" opacity="0.9"/><rect x="1058.2" y="241" width="3.2" height="1.2" fill="#fff" opacity="0.9"/><rect x="1073.1" y="253" width="3.3" height="1.2" fill="#fff" opacity="0.9"/><rect x="1052.6" y="242" width="2.4" height="1.2" fill="#fff" opacity="0.9"/><rect x="1069.0" y="259" width="3.3" height="1.2" fill="#fff" opacity="0.9"/><rect x="1047.6" y="235" width="3.3" height="1.2" fill="#fff" opacity="0.9"/><rect x="1071.2" y="263" width="3.3" height="1.2" fill="#fff" opacity="0.9"/><rect x="1080.1" y="255" width="3.5" height="1.2" fill="#fff" opacity="0.9"/><rect x="1060.8" y="249" width="4.5" height="1.2" fill="#fff" opacity="0.9"/><rect x="1062.9" y="258" width="3.6" height="1.2" fill="#fff" opacity="0.9"/><rect x="1055.0" y="251" width="4.4" height="1.2" fill="#fff" opacity="0.9"/><rect x="1047.2" y="246" width="3.5" height="1.2" fill="#fff" opacity="0.9"/><rect x="1083.6" y="270" width="3.3" height="1.2" fill="#fff" opacity="0.9"/><rect x="1084.4" y="263" width="2.9" height="1.2" fill="#fff" opacity="0.9"/><rect x="1064.9" y="232" width="4.8" height="1.2" fill="#fff" opacity="0.9"/><rect x="1073.8" y="267" width="4.8" height="1.2" fill="#fff" opacity="0.9"/><rect x="1074.0" y="260" width="4.0" height="1.2" fill="#fff" opacity="0.9"/><rect x="1048.6" y="254" width="2.0" height="1.2" fill="#fff" opacity="0.9"/><rect x="1050.5" y="262" width="2.2" height="1.2" fill="#fff" opacity="0.9"/><rect x="1048.1" y="231" width="5.1" height="1.2" fill="#fff" opacity="0.9"/><rect x="1052.1" y="228" width="4.9" height="1.2" fill="#fff" opacity="0.9"/><rect x="1049.5" y="265" width="4.4" height="1.2" fill="#fff" opacity="0.9"/><rect x="1081.6" y="270" width="4.0" height="1.2" fill="#fff" opacity="0.9"/><rect x="1079.9" y="228" width="4.7" height="1.2" fill="#fff" opacity="0.9"/><rect x="1067.0" y="259" width="2.4" height="1.2" fill="#fff" opacity="0.9"/><rect x="1077.7" y="269" width="2.2" height="1.2" fill="#fff" opacity="0.9"/><rect x="1058.6" y="252" width="4.9" height="1.2" fill="#fff" opacity="0.9"/><rect x="1054.9" y="235" width="2.9" height="1.2" fill="#fff" opacity="0.9"/><rect x="1071.7" y="261" width="3.4" height="1.2" fill="#fff" opacity="0.9"/><rect x="1060.5" y="245" width="3.2" height="1.2" fill="#fff" opacity="0.9"/><rect x="1062.8" y="230" width="3.8" height="1.2" fill="#fff" opacity="0.9"/><rect x="1087.8" y="245" width="4.6" height="1.2" fill="#fff" opacity="0.9"/><rect x="1051.2" y="258" width="4.6" height="1.2" fill="#fff" opacity="0.9"/><rect x="1074.3" y="250" width="3.7" height="1.2" fill="#fff" opacity="0.9"/><rect x="1072.9" y="268" width="2.5" height="1.2" fill="#fff" opacity="0.9"/><rect x="1048.3" y="261" width="5.2" height="1.2" fill="#fff" opacity="0.9"/><rect x="1067.3" y="247" width="4.5" height="1.2" fill="#fff" opacity="0.9"/><rect x="1052.4" y="239" width="2.7" height="1.2" fill="#fff" opacity="0.9"/><rect x="1070.4" y="241" width="2.8" height="1.2" fill="#fff" opacity="0.9"/><rect x="1075.1" y="270" width="3.0" height="1.2" fill="#fff" opacity="0.9"/><rect x="1075.7" y="246" width="5.0" height="1.2" fill="#fff" opacity="0.9"/><rect x="1070.3" y="239" width="2.8" height="1.2" fill="#fff" opacity="0.9"/><rect x="1045.0" y="249" width="3.3" height="1.2" fill="#fff" opacity="0.9"/><rect x="1051.8" y="243" width="3.1" height="1.2" fill="#fff" opacity="0.9"/><rect x="1078.8" y="233" width="5.5" height="1.2" fill="#fff" opacity="0.9"/><rect x="1065.6" y="254" width="3.6" height="1.2" fill="#fff" opacity="0.9"/><rect x="1081.6" y="264" width="3.9" height="1.2" fill="#fff" opacity="0.9"/><rect x="1065.7" y="260" width="5.0" height="1.2" fill="#fff" opacity="0.9"/><rect x="1062.0" y="260" width="5.4" height="1.2" fill="#fff" opacity="0.9"/><rect x="1065.0" y="237" width="2.8" height="1.2" fill="#fff" opacity="0.9"/><rect x="1076.3" y="258" width="5.4" height="1.2" fill="#fff" opacity="0.9"/><rect x="1082.4" y="238" width="2.7" height="1.2" fill="#fff" opacity="0.9"/><rect x="1055.6" y="235" width="4.5" height="1.2" fill="#fff" opacity="0.9"/><rect x="1082.6" y="268" width="2.9" height="1.2" fill="#fff" opacity="0.9"/><rect x="1082.9" y="241" width="3.5" height="1.2" fill="#fff" opacity="0.9"/><rect x="1076.8" y="230" width="2.3" height="1.2" fill="#fff" opacity="0.9"/><rect x="1081.5" y="240" width="3.2" height="1.2" fill="#fff" opacity="0.9"/><rect x="1070.1" y="258" width="2.0" height="1.2" fill="#fff" opacity="0.9"/><rect x="1059.1" y="247" width="3.7" height="1.2" fill="#fff" opacity="0.9"/><rect x="1053.5" y="253" width="5.3" height="1.2" fill="#fff" opacity="0.9"/><rect x="1061.6" y="252" width="2.4" height="1.2" fill="#fff" opacity="0.9"/><rect x="1056.4" y="257" width="2.4" height="1.2" fill="#fff" opacity="0.9"/><rect x="1083.9" y="268" width="2.3" height="1.2" fill="#fff" opacity="0.9"/><rect x="1086.4" y="244" width="4.7" height="1.2" fill="#fff" opacity="0.9"/><rect x="1078.1" y="240" width="4.4" height="1.2" fill="#fff" opacity="0.9"/><rect x="1073.4" y="264" width="2.9" height="1.2" fill="#fff" opacity="0.9"/><rect x="1077.9" y="271" width="4.4" height="1.2" fill="#fff" opacity="0.9"/><rect x="1068.1" y="232" width="3.7" height="1.2" fill="#fff" opacity="0.9"/><rect x="1059.8" y="260" width="4.4" height="1.2" fill="#fff" opacity="0.9"/><rect x="1069.5" y="235" width="4.3" height="1.2" fill="#fff" opacity="0.9"/><rect x="1072.4" y="235" width="5.1" height="1.2" fill="#fff" opacity="0.9"/><rect x="1073.5" y="232" width="5.3" height="1.2" fill="#fff" opacity="0.9"/><rect x="1050.4" y="242" width="4.5" height="1.2" fill="#fff" opacity="0.9"/><rect x="1070.9" y="252" width="4.3" height="1.2" fill="#fff" opacity="0.9"/><rect x="1064.6" y="241" width="2.6" height="1.2" fill="#fff" opacity="0.9"/><rect x="1047.1" y="259" width="4.6" height="1.2" fill="#fff" opacity="0.9"/><rect x="1068.4" y="261" width="3.3" height="1.2" fill="#fff" opacity="0.9"/><path d="M1067.2 227.3 L1064.3 229.5 L1059.6 240.6 L1055 251 L1051.6 255.4 L1048.5 257.3 L1054.8 259.5 L1062.8 261 L1073 262 L1079 259.5 L1084.8 258 L1081.8 255 L1077.5 244.2 L1073 234.6 L1070.9 228.8 Z" fill="#ffffd0" stroke="#0000ff" stroke-width="1.2"/><path d="M1068.7 233.9 L1065 246 L1062.8 261 M1061 244 Q1068 243 1077.5 244.2 M1069 248 L1081.8 255 M1065 246 L1073 262 M1052.6 254.4 Q1066 256 1084.8 258 M1057 247.8 L1060 259" fill="none" stroke="#0000ff" stroke-width="1"/></svg>
<div class="a" style="left:1101px;top:223px;width:136px;height:49px;background:#fff;border:1px solid #828282"></div>
<div class="a" style="left:1219px;top:224px;width:17px;height:47px;background:#f0f0f0"></div>
<div class="a" style="left:1108px;top:229px;width:13px;height:13px;border-radius:2px;background:#0a5fc0"></div>
<svg class="a" style="left:1108px;top:229px" width="13" height="13"><path d="M3.5 6.8 L5.7 9 L9.8 4.5" stroke="#fff" stroke-width="1" fill="none"/></svg>
<div class="a" style="left:1128px;top:225px;width:90px;height:21px;background:#0078d7"></div>
<div class="t" style="left:1130px;top:229.5px;font-size:12.65px;font-weight:normal;color:#fff;">C_omparison 1</div>
<div class="a" style="left:1108px;top:250px;width:13px;height:13px;border-radius:2px;background:#0a5fc0"></div>
<svg class="a" style="left:1108px;top:250px" width="13" height="13"><path d="M3.5 6.8 L5.7 9 L9.8 4.5" stroke="#fff" stroke-width="1" fill="none"/></svg>
<div class="t" style="left:1130px;top:250.5px;font-size:12.65px;font-weight:normal;color:#000;">D_im star</div>
<div class="c btn" style="left:1242px;top:242px;width:96px;height:28px;font-size:13px;font-weight:normal;border-color:#d8d8d8"></div>
<div class="a c" style="left:1248px;top:248px;width:17px;height:17px;border-radius:50%;background:#e01010;color:#fff;font-size:12px;font-weight:bold;font-family:Liberation Serif">i</div>
<div class="t" style="left:1270px;top:250.5px;font-size:12.4px;font-weight:normal;color:#000;">information</div>
<div class="a" style="left:1245px;top:273px;width:92px;height:34px;background:#fdfdfd;border:2px solid #1010f0;border-radius:3px"></div>
<svg class="a" style="left:1257px;top:279px" width="28" height="24"><path d="M2 3 h8 l2 3 h9 v5 h-19z" fill="#f8dca0" stroke="#e09030" stroke-width="1"/><path d="M2 21 L6 10 h20 l-4 11z" fill="#ffc81a" stroke="#e88a20" stroke-width="1"/></svg>
<div class="t" style="left:1286px;top:284px;font-size:14px;font-weight:normal;color:#000;">Video</div>
<div class="a" style="left:743px;top:322px;width:583px;height:26px;border-right:1px solid #a0a0a0;border-bottom:1px solid #a0a0a0;border-top:1px solid #fff"></div>
<div class="c" style="left:750px;top:327px;width:87px;height:17px;font-size:12.4px;font-weight:normal;color:#111;background:#00ffff;border-right:1px solid #a0a0a0;border-bottom:1px solid #a0a0a0;border-top:1px solid #fff;border-left:1px solid #fff">Preliminary</div>
<div class="c" style="left:839px;top:327px;width:78px;height:17px;font-size:12.4px;font-weight:normal;color:#111;background:#00ffff;border-right:1px solid #a0a0a0;border-bottom:1px solid #a0a0a0;border-top:1px solid #fff;border-left:1px solid #fff">LED/ Time</div>
<div class="c" style="left:918px;top:327px;width:71px;height:17px;font-size:12.4px;font-weight:normal;color:#111;background:#00ffff;border-right:1px solid #a0a0a0;border-bottom:1px solid #a0a0a0;border-top:1px solid #fff;border-left:1px solid #fff">Measure</div>
<div class="c" style="left:990px;top:327px;width:72px;height:17px;font-size:12.4px;font-weight:normal;color:#111;background:#00ffff;border-right:1px solid #a0a0a0;border-bottom:1px solid #a0a0a0;border-top:1px solid #fff;border-left:1px solid #fff">Identify</div>
<div class="c" style="left:1062px;top:327px;width:93px;height:17px;font-size:12.4px;font-weight:normal;color:#8a8a8a;background:#f0f0f0;border-right:1px solid #a0a0a0;border-bottom:1px solid #a0a0a0;border-top:1px solid #fff;border-left:1px solid #fff">Diffraction fit</div>
<div class="c" style="left:1158px;top:327px;width:63px;height:17px;font-size:12.4px;font-weight:normal;color:#111;background:#f0f0f0;border-right:1px solid #a0a0a0;border-bottom:1px solid #a0a0a0;border-top:1px solid #fff;border-left:1px solid #fff">Report</div>
<div class="c" style="left:1222px;top:327px;width:47px;height:17px;font-size:12.4px;font-weight:normal;color:#111;background:#f0f0f0;border-right:1px solid #a0a0a0;border-bottom:1px solid #a0a0a0;border-top:1px solid #fff;border-left:1px solid #fff"></div>
<div class="a" style="left:752px;top:379px;width:605px;height:437px;background:#f9f9f9;border:1px solid #e6e6e6"></div>
<div class="c" style="left:753px;top:357px;width:90px;height:23px;font-size:14.6px;font-weight:bold;color:#000;background:#f0f0f0;border:1px solid #e0e0e0;border-bottom:none;padding-bottom:2px">Preliminary</div>
<div class="c" style="left:844px;top:357px;width:83px;height:23px;font-size:14.6px;font-weight:bold;color:#000;background:#f0f0f0;border:1px solid #e0e0e0;border-bottom:none;padding-bottom:2px">LED Time</div>
<div class="c" style="left:1064px;top:357px;width:102px;height:23px;font-size:14.6px;font-weight:bold;color:#000;background:#f0f0f0;border:1px solid #e0e0e0;border-bottom:none;padding-bottom:2px">Diffraction fit</div>
<div class="c" style="left:1167px;top:357px;width:60px;height:23px;font-size:14.6px;font-weight:bold;color:#000;background:#f0f0f0;border:1px solid #e0e0e0;border-bottom:none;padding-bottom:2px">Report</div>
<div class="c" style="left:1228px;top:357px;width:53px;height:23px;font-size:14.6px;font-weight:bold;color:#000;background:#f0f0f0;border:1px solid #e0e0e0;border-bottom:none;padding-bottom:2px">Files</div>
<div class="c" style="left:1282px;top:357px;width:51px;height:23px;font-size:14.6px;font-weight:bold;color:#000;background:#f0f0f0;border:1px solid #e0e0e0;border-bottom:none;padding-bottom:2px">Tools</div>
<div class="c" style="left:927px;top:354px;width:137px;height:26px;font-size:14.6px;font-weight:bold;color:#000;background:#f9f9f9;border:1px solid #dadada;border-bottom:none;padding-bottom:5px">Measure / identfy</div>
<div class="a" style="left:1319px;top:380px;width:37px;height:435px;background:#f9f9f9"></div>
<div class="a" style="left:780px;top:380px;width:539px;height:145px;background:#fff0f5;border-right:1px solid #a8a8a8;border-bottom:1px solid #a8a8a8"></div>
<div class="a" style="left:780px;top:380px;width:538px;height:20px;overflow:hidden"><div class="t" style="left:63px;top:-3.5px;font-size:15.6px;font-weight:bold;color:#800000">&lt;&lt;&lt;Light measurement : obtaining a light curve&gt;&gt;&gt;</div></div>
<div class="a" style="left:781px;top:398px;width:117px;height:78px;background:#fbfbfb;border:1px solid #d8d8d8;border-radius:4px"></div>
<svg class="a" style="left:785px;top:401px" width="108" height="72"><rect width="108" height="72" fill="#3c3c3c"/>
<g fill="#aaa"><circle cx="14" cy="12" r="0.8"/><circle cx="24" cy="18" r="1" fill="#111"/><circle cx="10" cy="32" r="0.8"/><circle cx="83" cy="11" r="0.8"/><circle cx="80" cy="28" r="0.8"/><circle cx="40" cy="56" r="0.8"/><circle cx="60" cy="57" r="1" fill="#111"/></g>
<circle cx="18" cy="37" r="2" fill="#ddd"/>
<circle cx="54" cy="26" r="14.5" fill="none" stroke="#1ea0f0" stroke-width="1.2"/>
<circle cx="54" cy="26" r="5" fill="none" stroke="#1ea0f0" stroke-width="1.2"/>
<circle cx="54" cy="26" r="3.2" fill="#fff" stroke="#e02020" stroke-width="1.5"/>
<g transform="rotate(-50 87 51)"><rect x="73" y="46" width="28" height="10" rx="2" fill="none" stroke="#a09a30" stroke-width="1"/></g>
<circle cx="87" cy="51" r="4" fill="none" stroke="#a09a30" stroke-width="1"/>
<circle cx="87" cy="51" r="2.8" fill="#fff" stroke="#e02020" stroke-width="1.4"/>
<path d="M21.5 41.5 v16 l3.4 -3.4 l3.2 6.6 l2.4 -1.2 l-3.1 -6.4 h5 z" fill="#333" stroke="#fff" stroke-width="1"/>
</svg>
<div class="t" style="left:899.3px;top:399px;font-size:14.8px;font-weight:bold;color:#0f7f80;">Click the target star on video image.</div>
<div class="t" style="left:901px;top:415px;font-size:14.8px;font-weight:bold;color:#0f7f80;">The measurement region will be centered on the star.</div>
<div class="t" style="left:902.5px;top:439px;font-size:14.67px;font-weight:bold;color:#0f7f80;">To add other comparison star, right click the star</div>
<div class="t" style="left:935px;top:455px;font-size:14.6px;font-weight:bold;color:#0f7f80;">and select "Add star"</div>
<div class="t" style="left:902.5px;top:475px;font-size:14.7px;font-weight:bold;color:#0f7f80;">Perform mesurement with</div>
<div class="a" style="left:1085px;top:470px;width:20px;height:20px;background:#fbfbfb;border:1px solid #d8d8d8;border-radius:3px"></div>
<svg class="a" style="left:1085px;top:470px" width="20" height="20"><circle cx="10" cy="10" r="8" fill="#e81818"/><circle cx="10" cy="10" r="6.3" fill="#fff"/><path d="M3.5 11 q3 -2 6.5 0 q3.5 2 6.5 -1 q0 6 -6.5 7 q-6.5 -1 -6.5 -6z" fill="#e81818"/><path d="M10 12 l4 -5" stroke="#222" stroke-width="1.4"/></svg>
<div class="t" style="left:1106.5px;top:475px;font-size:14.6px;font-weight:bold;color:#0f7f80;">, and stop with</div>
<div class="a" style="left:1213px;top:470px;width:21px;height:20px;background:#fbfbfb;border:1px solid #d8d8d8;border-radius:3px"></div>
<div class="a" style="left:1218px;top:475px;width:11px;height:10px;background:#1e6e68"></div>
<div class="t" style="left:1238px;top:475px;font-size:14px;font-weight:bold;color:#0f7f80;">.</div>
<div class="c btn" style="left:789px;top:494px;width:285px;height:26px;font-size:14.67px;font-weight:bold;border-color:#d4d4d4">Correction for thin cloud absorption</div>
<div class="t" style="left:1075px;top:505px;font-size:13px;font-weight:bold;color:#8a8a8a;">&lt;&lt;&lt; if necessary</div>
<div class="a" style="left:1300px;top:389px;width:17px;height:130px;border:1px solid #a8a8a8;border-right-color:#e8e8e8;border-bottom-color:#e8e8e8;padding:1px"></div>
<div class="a" style="left:1303px;top:391px;width:11px;height:125px;background:#00ffff"></div>
<div class="a" style="left:780px;top:525px;width:539px;height:88px;background:#e0ffff;border-right:1px solid #a8a8a8;border-bottom:1px solid #a8a8a8"></div>
<div class="t" style="left:835px;top:527px;font-size:15.6px;font-weight:bold;color:#000080;">&lt;&lt;&lt; Identify penomenon / Observer / Site&gt;&gt;&gt;</div>
<div class="c btn" style="left:804px;top:546px;width:118px;height:30px;font-size:14.5px;font-weight:bold;border-color:#d4d4d4">Spectral chart</div>
<div class="a" style="left:970px;top:542px;width:323px;height:63px;background:#008080;border-radius:1px"></div>
<div class="a" style="left:972.5px;top:544.5px;width:318px;height:58px;background:#fdfdfd;border:1px solid #d0d8d8;border-radius:5px"></div>
<svg class="a" style="left:996px;top:549px" width="40" height="50"><path d="M7.5 2.5 h17.5 l5.5 5.5 v30.5 h-23z" fill="#fff" stroke="#18a0ec" stroke-width="3"/><path d="M10 10.5 h19" stroke="#18a0ec" stroke-width="1.6" stroke-dasharray="2.5 1.3"/><path d="M13 16 l-3 3 l3 3 M23 16 l3 3 l-3 3 M19.5 15 l-3 8" stroke="#18a0ec" stroke-width="1.5" fill="none"/><text x="18.5" y="31.8" font-size="10" font-weight="bold" text-anchor="middle" fill="#000" font-family="Liberation Sans" textLength="22" lengthAdjust="spacingAndGlyphs" stroke="#000" stroke-width="0.4">XML</text><text x="20" y="47.5" font-size="9.5" text-anchor="middle" fill="#000" font-family="Liberation Sans" textLength="35" lengthAdjust="spacingAndGlyphs">occelmnt</text></svg>
<div class="t" style="left:1040.6px;top:557px;font-size:14.55px;font-weight:bold;color:#000;">Read Asteroid / Star information</div>
<div class="t" style="left:1071px;top:575px;font-size:14.6px;font-weight:bold;color:#000;word-spacing:1.4px">and Set Observer / Site</div>
<div class="a" style="left:1300px;top:526px;width:17px;height:82px;border:1px solid #a8a8a8;border-right-color:#e8e8e8;border-bottom-color:#e8e8e8"></div>
<div class="a" style="left:1302px;top:528px;width:12px;height:77px;background:#00ffff"></div>
<div class="a" style="left:780px;top:615px;width:539px;height:160px;background:#f0fff0;border-right:1px solid #a8a8a8;border-bottom:1px solid #a8a8a8"></div>
<div class="t" style="left:796px;top:625px;font-size:15.6px;font-weight:bold;color:#008000;">&lt;&lt;&lt; Make a set of&nbsp; .dat format light curve data for reporting&gt;&gt;&gt;</div>
<div class="a" style="left:787px;top:644px;width:398px;height:55px;background:#fff;border-bottom:1px solid #8a8a8a"></div>
<div class="a" style="left:1168px;top:645px;width:16px;height:53px;background:#f0f0f0"></div>
<div class="a" style="left:1175px;top:663px;width:2px;height:17px;background:#888"></div>
<div class="t" style="left:789.5px;top:648px;font-size:12.7px;font-weight:bold;color:#000;letter-spacing:-0.1px">95:3475:3004:3324:3114:3681:2960:3291:2545:3223:2666:2674:2</div>
<div class="t" style="left:789.5px;top:664px;font-size:12.7px;font-weight:bold;color:#000;letter-spacing:-0.1px">742:2907:3570:2791:3016:3104</div>
<div class="t" style="left:792.6px;top:713px;font-size:14.67px;font-weight:bold;color:#0f7f80;">Light curve data which is displaied</div>
<div class="t" style="left:792.6px;top:731px;font-size:14.67px;font-weight:bold;color:#0f7f80;word-spacing:0.3px">in left graoh will be added to</div>
<div class="t" style="left:792.6px;top:749px;font-size:14.67px;font-weight:bold;color:#0f7f80;word-spacing:1.4px">observation report text as above.</div>
<div class="a" style="left:1042px;top:704px;width:252px;height:65px;background:#008080;border-radius:1px"></div>
<div class="a" style="left:1044.5px;top:706.5px;width:247px;height:60px;background:#fdfdfd;border:1px solid #d0d8d8;border-radius:5px"></div>
<svg class="a" style="left:0;top:0" width="1360" height="819"><polyline points="1056,725.8 1060.6,722.7 1065,727.8 1069,721.4 1073,724.7 1077.4,727.8 1080.5,749.7 1084.6,751 1089,750.2 1092.8,751 1096.7,724.7 1101,727.8 1105,722.7 1109,726.5 1113.4,724.7 1117.3,727" fill="none" stroke="#3a9ae8" stroke-width="1"/><g fill="#3a3ac8"><circle cx="1056" cy="725.8" r="2"/><circle cx="1060.6" cy="722.7" r="2"/><circle cx="1065" cy="727.8" r="2"/><circle cx="1069" cy="721.4" r="2"/><circle cx="1073" cy="724.7" r="2"/><circle cx="1077.4" cy="727.8" r="2"/><circle cx="1080.5" cy="749.7" r="2"/><circle cx="1084.6" cy="751" r="2"/><circle cx="1089" cy="750.2" r="2"/><circle cx="1092.8" cy="751" r="2"/><circle cx="1096.7" cy="724.7" r="2"/><circle cx="1101" cy="727.8" r="2"/><circle cx="1105" cy="722.7" r="2"/><circle cx="1109" cy="726.5" r="2"/><circle cx="1113.4" cy="724.7" r="2"/><circle cx="1117.3" cy="727" r="2"/></g></svg>
<div class="t" style="left:1131px;top:720px;font-size:14.4px;font-weight:bold;color:#000;">Add .dat format Light</div>
<div class="t" style="left:1132px;top:738px;font-size:14.67px;font-weight:bold;color:#000;word-spacing:1.5px">curve data to report</div>
<div class="a" style="left:1299px;top:616px;width:18px;height:150px;border:1px solid #a8a8a8;border-right-color:#e8e8e8;border-bottom-color:#e8e8e8"></div>
<div class="a" style="left:1302px;top:618px;width:12px;height:145px;background:#00ffff"></div>
<div class="a" style="left:1109px;top:779px;width:213px;height:35px;background:#008080"></div>
<div class="a" style="left:1113px;top:782px;width:205px;height:28px;background:#fdfdfd;border-radius:3px"></div>
<div class="t" style="left:1129px;top:789px;font-size:14.7px;font-weight:bold;color:#000;">Next, go to Diffraction fit</div></body></html>
